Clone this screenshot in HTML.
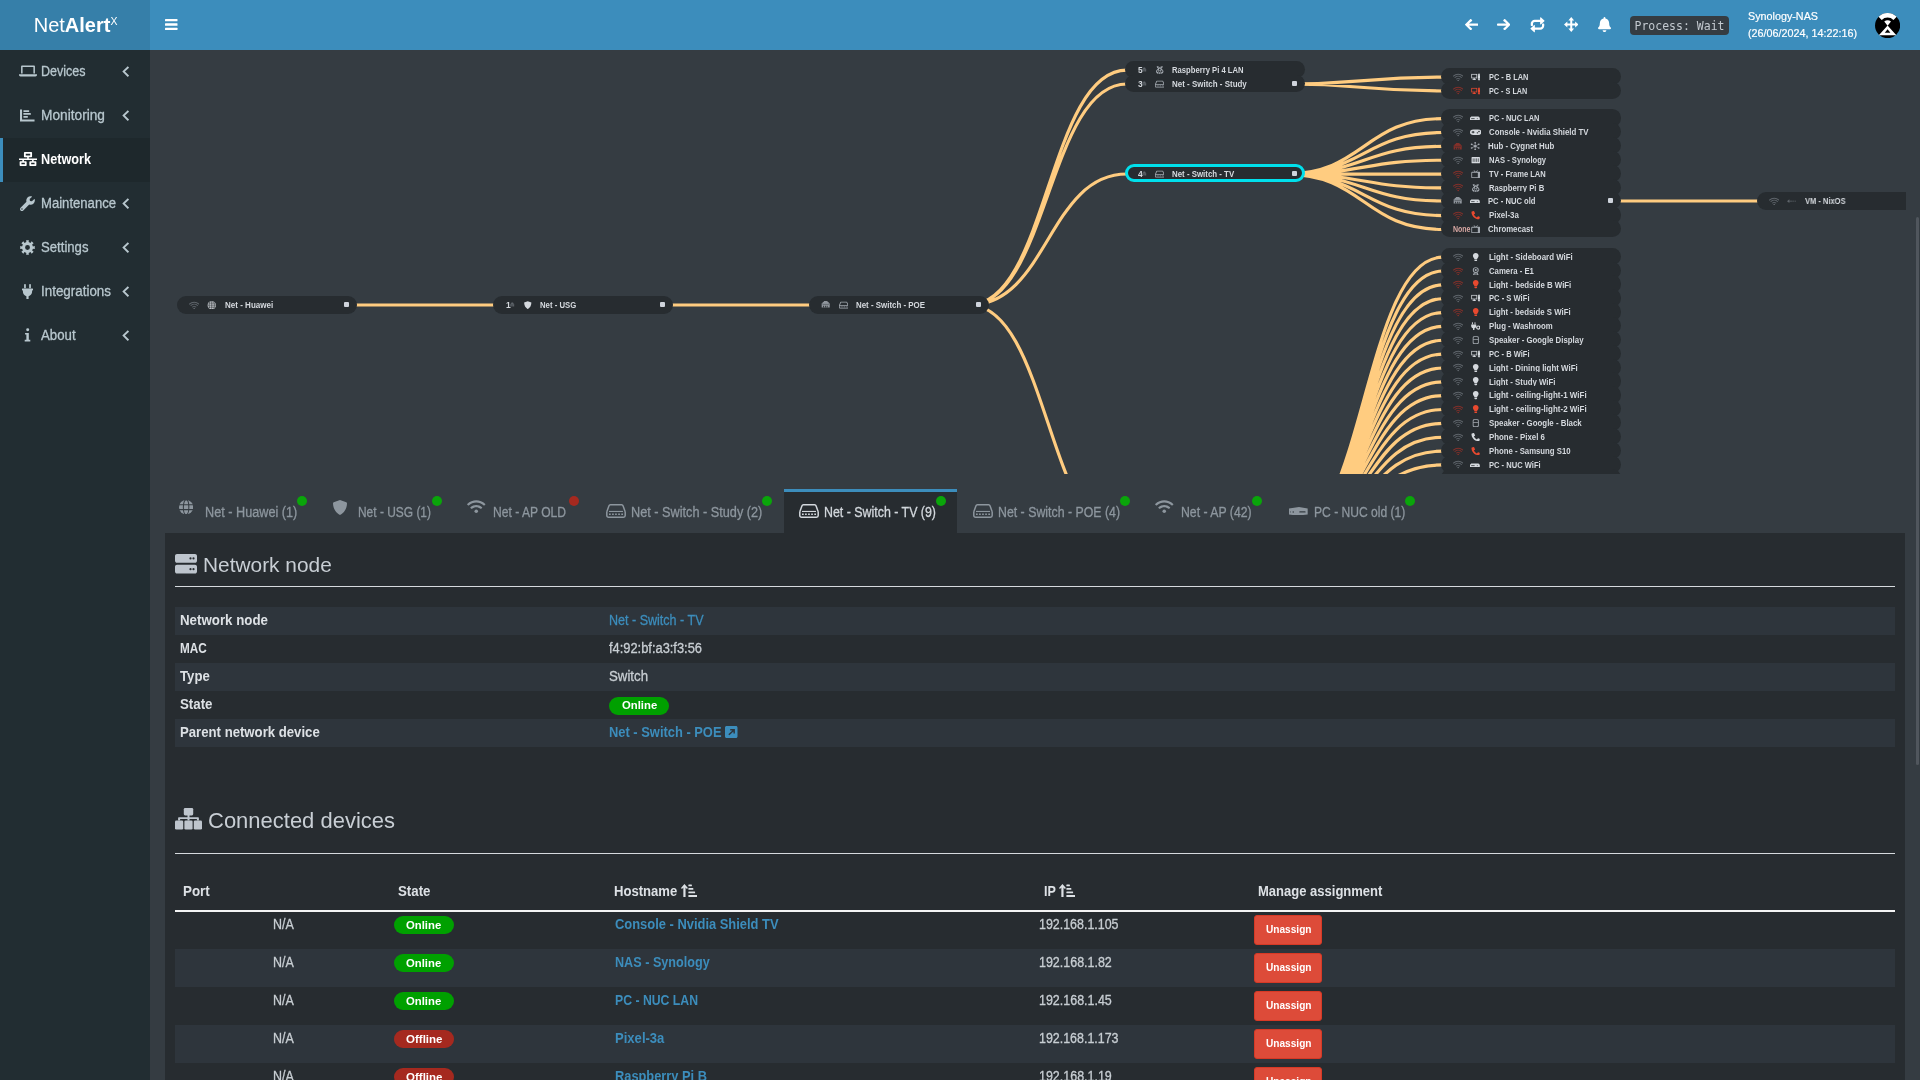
<!DOCTYPE html>
<html lang="en"><head><meta charset="utf-8"><title>NetAlertX - Network</title>
<style>
*{box-sizing:border-box}
html,body{margin:0;padding:0}
body{width:1920px;height:1080px;overflow:hidden;background:#353c42;font-family:"Liberation Sans",sans-serif;color:#bec5cb;font-size:13px;position:relative}
.ic{position:absolute;display:block;line-height:0}
.mi{position:absolute;display:block}
.t{position:absolute;white-space:nowrap;line-height:1;display:block;transform-origin:0 50%}
#hdr{position:absolute;left:0;top:0;width:1920px;height:50px;background:#3c8dbc;will-change:transform}
#logo{position:absolute;left:0;top:0;width:150px;height:50px;background:#367fa9;color:#fff}
#side{position:absolute;left:0;top:50px;width:150px;height:1030px;background:#222d32;will-change:transform}
#side .act{position:absolute;left:0;top:88px;width:150px;height:44px;background:#1e282c;border-left:3px solid #3c8dbc}
#tree{position:absolute;left:165px;top:50px;width:1741px;height:424px;overflow:hidden;will-change:transform}
#tree svg.links{position:absolute;left:0;top:0}
.nd{position:absolute;width:180px;height:18px;border-radius:9px;background:#272c30}
.nl{font-weight:bold;color:#d5d9de}
.tg{position:absolute;width:5px;height:5px;background:#cfd4dc;border-radius:1px}
#tabs{position:absolute;left:165px;top:489px;width:1740px;height:44px;background:#353c42;will-change:transform}
#tabs .on{position:absolute;left:619px;top:0;width:173px;height:44px;background:#272c30;border-top:3px solid #3c8dbc}
.dot{position:absolute;width:10px;height:10px;border-radius:5px}
#pane{position:absolute;left:165px;top:533px;width:1740px;height:560px;background:#272c30;will-change:transform}
.hr{position:absolute;left:10px;width:1720px;height:1px;background:#d6dade}
.row{position:absolute;left:10px;width:1720px}
.st{background:#2e353c}
.bdg{position:absolute;height:18px;border-radius:9px}
.btn{position:absolute;width:68px;height:30px;background:#dd4b39;border:1px solid #d73925;border-radius:3px}
#sb{position:absolute;left:1915.500px;top:216.500px;width:3px;height:548px;border-radius:1.500px;background:#50565d}
</style></head>
<body>
<div id="hdr">
<div id="logo">
<div id="logo"><span class="t" style="left:33.700px;top:14px;font-size:20px;line-height:23px;color:#fff">Net<b>Alert</b></span><span class="t" style="left:110.500px;top:16px;font-size:10.500px;color:#fff">X</span></div>
<span class="ic" style="left:165px;top:19px;width:12.5px;height:11px;"><svg width="12.5" height="11" viewBox="0 0 13 11" fill="#fff" preserveAspectRatio="none" style="display:block;color:#fff;"><rect x="0" y="0" width="13" height="2.300" rx=".5"/><rect x="0" y="4.350" width="13" height="2.300" rx=".5"/><rect x="0" y="8.700" width="13" height="2.300" rx=".5"/></svg></span>
<span class="ic" style="left:1464.8px;top:19.2px;width:13.4px;height:11.2px;"><svg width="13.4" height="11.2" viewBox="0 0 14 13" fill="#fff" preserveAspectRatio="none" style="display:block;color:#fff;"><path d="M7.300 11.900 6.500 12.700c-.3.300-.800.300-1.100 0L.2 7.100c-.3-.3-.3-.800 0-1.100L5.400.3c.3-.3.800-.3 1.100 0l.8.800c.3.300.3.800 0 1.100L4.100 5.300h9.100c.400 0 .800.300.800.800v1c0 .400-.300.800-.800.800H4.100l3.200 3c.3.200.3.700 0 1z"/></svg></span>
<span class="ic" style="left:1497px;top:19.2px;width:13.4px;height:11.2px;"><svg width="13.4" height="11.2" viewBox="0 0 14 13" fill="#fff" preserveAspectRatio="none" style="display:block;color:#fff;"><g transform="translate(14 0) scale(-1 1)"><path d="M7.300 11.900 6.500 12.700c-.3.300-.800.300-1.100 0L.2 7.100c-.3-.3-.3-.800 0-1.100L5.400.3c.3-.3.800-.3 1.100 0l.8.800c.3.300.3.800 0 1.100L4.100 5.300h9.100c.400 0 .800.300.800.800v1c0 .400-.300.800-.800.800H4.100l3.200 3c.3.200.3.700 0 1z"/></g></svg></span>
<span class="ic" style="left:1529.5px;top:17px;width:15px;height:15.5px;"><svg width="15" height="15.5" viewBox="0 0 16 16" fill="#fff" preserveAspectRatio="none" style="display:block;color:#fff;"><path d="M.8 8.600V7c0-2.300 1.900-4.200 4.200-4.200h5.800V.9c0-.5.600-.8 1-.4l3.500 3c.3.300.3.700 0 1l-3.500 3c-.4.300-1 .100-1-.4V5.200H5c-1 0-1.800.800-1.800 1.800v1.600c0 .300-.3.600-.6.600H1.400c-.3 0-.6-.3-.6-.6z"/><path d="M15.200 7.400V9c0 2.300-1.900 4.200-4.200 4.200H5.200v1.900c0 .5-.600.800-1 .4l-3.500-3c-.3-.3-.3-.7 0-1l3.500-3c.4-.3 1-.100 1 .4v1.900H11c1 0 1.800-.800 1.800-1.800V7.400c0-.3.300-.6.600-.6h1.200c.3 0 .6.300.6.600z"/></svg></span>
<span class="ic" style="left:1563.5px;top:17px;width:14.5px;height:15px;"><svg width="14.5" height="15" viewBox="0 0 16 16" fill="#fff" preserveAspectRatio="none" style="display:block;color:#fff;"><path d="M8 0 11.200 3.700H9.100V6.900H12.300V4.800L16 8 12.300 11.200V9.100H9.100V12.300H11.200L8 16 4.800 12.300H6.900V9.100H3.700V11.200L0 8 3.700 4.800V6.900H6.900V3.700H4.800Z"/></svg></span>
<span class="ic" style="left:1598px;top:17px;width:13px;height:15px;"><svg width="13" height="15" viewBox="0 0 14 16" fill="#fff" preserveAspectRatio="none" style="display:block;color:#fff;"><path d="M7 16c1.100 0 2-.9 2-2H5c0 1.100.9 2 2 2zM13.700 11.300c-.6-.6-1.700-1.600-1.700-4.800 0-2.400-1.700-4.300-4-4.800V1c0-.6-.4-1-1-1S6 .4 6 1v.7C3.700 2.200 2 4.100 2 6.500c0 3.200-1.100 4.200-1.700 4.800-.2.200-.3.500-.3.700 0 .5.400 1 1 1h12c.6 0 1-.5 1-1 0-.2-.1-.5-.3-.7z"/></svg></span>
<span class="t" style="left:1630px;top:16px;width:99px;height:19px;background:#353c42;border-radius:4px"></span>
<span class="t" id="f1" style="left:1634.50px;top:21.00px;font-size:11.5px;color:#c3c9cf;font-family:'DejaVu Sans Mono','Liberation Mono',monospace;">Process: Wait</span>
<span class="t" id="f2" style="left:1748.00px;top:11.00px;font-size:11.5px;color:#fff;transform:scaleX(0.9359);-webkit-text-stroke:.2px #fff;">Synology-NAS</span>
<span class="t" id="f3" style="left:1748.00px;top:28.00px;font-size:11.5px;color:#fff;transform:scaleX(0.9366);-webkit-text-stroke:.2px #fff;">(26/06/2024, 14:22:16)</span>
<span class="ic" style="left:1875px;top:12.800px;width:25.200px;height:25.200px"><svg width="25.200" height="25.200" viewBox="0 0 25 25"><circle cx="12.500" cy="12.500" r="12.500" fill="#000"/><path d="M3.510 3.810A12.500 12.500 0 0 1 21.490 3.810L18.330 6.870A8.100 8.100 0 0 0 6.670 6.870ZM12.500 12.700 9.160 8.520A5.200 5.200 0 0 1 15.840 8.520ZM12.500 12.300 21.200 22H3.800Z" fill="#fff"/><path d="M12.500 16.200 15.300 19.600H9.700Z" fill="#000"/></svg></span>
</div>
<div id="side"><div class="act"></div>
<span class="ic" style="left:19px;top:15px;width:18px;height:12px;"><svg width="18" height="12" viewBox="0 0 20 14" fill="#b8c7ce" preserveAspectRatio="none" style="display:block;color:#b8c7ce;"><path d="M3.2 0.6h13.6c.5 0 .9.4.9.9v8.3h-1.7V2.2H4v7.6H2.3V1.5c0-.5.4-.9.9-.9z"/><path d="M0 10.8h20v.9c0 .9-.8 1.6-1.7 1.6H1.7C.8 13.300 0 12.600 0 11.700z"/></svg></span>
<span class="t" id="f4" style="left:41.00px;top:14.00px;font-size:14px;color:#b8c7ce;-webkit-text-stroke:.3px;transform:scaleX(0.8956);">Devices</span>
<span class="ic" style="left:121.6px;top:16.3px;width:7.4px;height:11.2px;"><svg width="7.4" height="11.2" viewBox="0 0 8 12" fill="#b8c7ce" preserveAspectRatio="none" style="display:block;color:#b8c7ce;"><path d="M6.200.3 7.700 1.700 3.200 6l4.500 4.300-1.500 1.400L.3 6z"/></svg></span>
<span class="ic" style="left:20px;top:58.5px;width:15px;height:13px;"><svg width="15" height="13" viewBox="0 0 16 14" fill="#b8c7ce" preserveAspectRatio="none" style="display:block;color:#b8c7ce;"><path d="M0 .5h2.2v10.800H15.500v2.200H0z"/><rect x="3.600" y="1.300" width="6.200" height="1.900" rx=".4"/><rect x="3.600" y="4.400" width="8" height="1.900" rx=".4"/><rect x="3.600" y="7.500" width="4.800" height="1.900" rx=".4"/><rect x="3.600" y="7.500" width="9.700" height="1.900" rx=".4" opacity="0"/></svg></span>
<span class="t" id="f5" style="left:41.00px;top:58.00px;font-size:14px;color:#b8c7ce;-webkit-text-stroke:.3px;transform:scaleX(0.9790);">Monitoring</span>
<span class="ic" style="left:121.6px;top:60.3px;width:7.4px;height:11.2px;"><svg width="7.4" height="11.2" viewBox="0 0 8 12" fill="#b8c7ce" preserveAspectRatio="none" style="display:block;color:#b8c7ce;"><path d="M6.200.3 7.700 1.700 3.200 6l4.500 4.300-1.500 1.400L.3 6z"/></svg></span>
<span class="ic" style="left:19px;top:102px;width:18px;height:14px;"><svg width="18" height="14" viewBox="0 0 20 16" fill="#fff" preserveAspectRatio="none" style="display:block;color:#fff;"><path fill-rule="evenodd" d="M6.300 0h7.400c.5 0 .8.400.8.800v4.400c0 .500-.400.800-.800.800h-2.800v1.500H20v1.700h-3.700v1.300h2.200c.500 0 .800.400.800.800v3.900c0 .500-.400.800-.800.800h-6.200c-.500 0-.800-.400-.800-.800v-3.900c0-.500.400-.800.800-.800h2.200V9.200H5.500v1.300h2.200c.500 0 .800.400.800.800v3.900c0 .500-.400.800-.800.800H1.500c-.500 0-.800-.400-.800-.800v-3.900c0-.500.400-.800.800-.800h2.200V9.200H0V7.500h9.100V6H6.300c-.500 0-.800-.400-.800-.800V.8c0-.500.400-.800.800-.800zM7.500 1.900v2.200h5V1.900zM2.700 12.400v1.700h3.800v-1.700zM13.500 12.400v1.700h3.800v-1.700z"/></svg></span>
<span class="t" id="f6" style="left:41.00px;top:102.00px;font-size:14px;color:#fff;font-weight:bold;transform:scaleX(0.9052);">Network</span>
<span class="ic" style="left:20px;top:145.5px;width:15px;height:15px;"><svg width="15" height="15" viewBox="0 0 16 16" fill="#b8c7ce" preserveAspectRatio="none" style="display:block;color:#b8c7ce;"><path d="M15.700 3.600c-.1-.3-.4-.4-.7-.2l-2.300 2.300-2.100-.3-.3-2.100L12.600 1c.2-.2.1-.6-.2-.7C10.900-.1 9.200.3 8 1.500 6.700 2.800 6.400 4.600 6.900 6.200L.6 12.500c-.8.800-.8 2.100 0 2.900s2.100.8 2.900 0l6.300-6.300c1.600.5 3.400.2 4.700-1.100 1.200-1.200 1.600-2.900 1.200-4.400zM2.100 14.700c-.4 0-.8-.3-.8-.8s.3-.8.800-.8.800.3.800.8-.4.800-.8.800z"/></svg></span>
<span class="t" id="f7" style="left:41.00px;top:146.00px;font-size:14px;color:#b8c7ce;-webkit-text-stroke:.3px;transform:scaleX(0.9355);">Maintenance</span>
<span class="ic" style="left:121.6px;top:148.3px;width:7.4px;height:11.2px;"><svg width="7.4" height="11.2" viewBox="0 0 8 12" fill="#b8c7ce" preserveAspectRatio="none" style="display:block;color:#b8c7ce;"><path d="M6.200.3 7.700 1.700 3.200 6l4.500 4.300-1.500 1.400L.3 6z"/></svg></span>
<span class="ic" style="left:20px;top:189.5px;width:15px;height:15px;"><svg width="15" height="15" viewBox="0 0 16 16" fill="#b8c7ce" preserveAspectRatio="none" style="display:block;color:#b8c7ce;"><path fill-rule="evenodd" d="M6.51 0.24 L9.49 0.24 L9.20 2.22 L11.24 3.07 L12.43 1.46 L14.54 3.57 L12.93 4.76 L13.78 6.80 L15.76 6.51 L15.76 9.49 L13.78 9.20 L12.93 11.24 L14.54 12.43 L12.43 14.54 L11.24 12.93 L9.20 13.78 L9.49 15.76 L6.51 15.76 L6.80 13.78 L4.76 12.93 L3.57 14.54 L1.46 12.43 L3.07 11.24 L2.22 9.20 L0.24 9.49 L0.24 6.51 L2.22 6.80 L3.07 4.76 L1.46 3.57 L3.57 1.46 L4.76 3.07 L6.80 2.22Z M8 5.400a2.600 2.600 0 1 0 0 5.200a2.600 2.600 0 1 0 0-5.200z"/></svg></span>
<span class="t" id="f8" style="left:41.00px;top:190.00px;font-size:14px;color:#b8c7ce;-webkit-text-stroke:.3px;transform:scaleX(0.9389);">Settings</span>
<span class="ic" style="left:121.6px;top:192.3px;width:7.4px;height:11.2px;"><svg width="7.4" height="11.2" viewBox="0 0 8 12" fill="#b8c7ce" preserveAspectRatio="none" style="display:block;color:#b8c7ce;"><path d="M6.200.3 7.700 1.700 3.200 6l4.500 4.300-1.500 1.400L.3 6z"/></svg></span>
<span class="ic" style="left:22px;top:233.5px;width:11px;height:15px;"><svg width="11" height="15" viewBox="0 0 12 16" fill="#b8c7ce" preserveAspectRatio="none" style="display:block;color:#b8c7ce;"><rect x="2.300" y="0" width="1.900" height="4.500" rx=".9"/><rect x="7.800" y="0" width="1.900" height="4.500" rx=".9"/><path d="M.5 4.900h11c.3 0 .5.2.5.5v.9c0 .3-.2.5-.5.5H11v1.500c0 2.300-1.600 4.200-3.800 4.700V16H4.800v-3c-2.200-.5-3.800-2.400-3.800-4.700V6.800H.5C.2 6.800 0 6.600 0 6.300v-.9c0-.3.2-.5.5-.5z"/></svg></span>
<span class="t" id="f9" style="left:41.00px;top:234.00px;font-size:14px;color:#b8c7ce;-webkit-text-stroke:.3px;transform:scaleX(0.9567);">Integrations</span>
<span class="ic" style="left:121.6px;top:236.3px;width:7.4px;height:11.2px;"><svg width="7.4" height="11.2" viewBox="0 0 8 12" fill="#b8c7ce" preserveAspectRatio="none" style="display:block;color:#b8c7ce;"><path d="M6.200.3 7.700 1.700 3.200 6l4.500 4.300-1.500 1.400L.3 6z"/></svg></span>
<span class="ic" style="left:24px;top:278px;width:7px;height:14px;"><svg width="7" height="14" viewBox="0 0 8 16" fill="#b8c7ce" preserveAspectRatio="none" style="display:block;color:#b8c7ce;"><circle cx="4.200" cy="1.900" r="1.700"/><path d="M1.200 5.600h4.300v7.900h1.700v1.900H.8v-1.900h1.900V7.500H1.200z"/></svg></span>
<span class="t" id="f10" style="left:41.00px;top:278.00px;font-size:14px;color:#b8c7ce;-webkit-text-stroke:.3px;transform:scaleX(0.9455);">About</span>
<span class="ic" style="left:121.6px;top:280.3px;width:7.4px;height:11.2px;"><svg width="7.4" height="11.2" viewBox="0 0 8 12" fill="#b8c7ce" preserveAspectRatio="none" style="display:block;color:#b8c7ce;"><path d="M6.200.3 7.700 1.700 3.200 6l4.500 4.300-1.500 1.400L.3 6z"/></svg></span>
</div>
<div id="tree">
<svg class="links" width="1740" height="424" viewBox="0 0 1740 424" fill="none" stroke="#ffcc80" stroke-width="3.150"><path d="M172.0 255.00C251.0 255.00 251.0 255.00 330.0 255.00 M488.0 255.00C567.0 255.00 567.0 255.00 646.0 255.00 M804.0 255.00C883.0 255.00 883.0 20.17 962.0 20.17 M804.0 255.00C883.0 255.00 883.0 34.02 962.0 34.02 M804.0 255.00C883.0 255.00 883.0 124.05 962.0 124.05 M804.0 255.00C883.0 255.00 883.0 491.07 962.0 491.07 M1120.0 34.02C1199.0 34.02 1199.0 27.10 1278.0 27.10 M1120.0 34.02C1199.0 34.02 1199.0 40.95 1278.0 40.95 M1120.0 124.05C1199.0 124.05 1199.0 68.65 1278.0 68.65 M1120.0 124.05C1199.0 124.05 1199.0 82.50 1278.0 82.50 M1120.0 124.05C1199.0 124.05 1199.0 96.35 1278.0 96.35 M1120.0 124.05C1199.0 124.05 1199.0 110.20 1278.0 110.20 M1120.0 124.05C1199.0 124.05 1199.0 124.05 1278.0 124.05 M1120.0 124.05C1199.0 124.05 1199.0 137.90 1278.0 137.90 M1120.0 124.05C1199.0 124.05 1199.0 151.00 1278.0 151.00 M1120.0 124.05C1199.0 124.05 1199.0 165.60 1278.0 165.60 M1120.0 124.05C1199.0 124.05 1199.0 179.45 1278.0 179.45 M1120.0 491.07C1199.0 491.07 1199.0 207.15 1278.0 207.15 M1120.0 491.07C1199.0 491.07 1199.0 221.00 1278.0 221.00 M1120.0 491.07C1199.0 491.07 1199.0 234.85 1278.0 234.85 M1120.0 491.07C1199.0 491.07 1199.0 248.70 1278.0 248.70 M1120.0 491.07C1199.0 491.07 1199.0 262.55 1278.0 262.55 M1120.0 491.07C1199.0 491.07 1199.0 276.40 1278.0 276.40 M1120.0 491.07C1199.0 491.07 1199.0 290.25 1278.0 290.25 M1120.0 491.07C1199.0 491.07 1199.0 304.10 1278.0 304.10 M1120.0 491.07C1199.0 491.07 1199.0 317.95 1278.0 317.95 M1120.0 491.07C1199.0 491.07 1199.0 331.80 1278.0 331.80 M1120.0 491.07C1199.0 491.07 1199.0 345.65 1278.0 345.65 M1120.0 491.07C1199.0 491.07 1199.0 359.50 1278.0 359.50 M1120.0 491.07C1199.0 491.07 1199.0 373.35 1278.0 373.35 M1120.0 491.07C1199.0 491.07 1199.0 387.20 1278.0 387.20 M1120.0 491.07C1199.0 491.07 1199.0 401.05 1278.0 401.05 M1120.0 491.07C1199.0 491.07 1199.0 414.90 1278.0 414.90 M1120.0 491.07C1199.0 491.07 1199.0 428.75 1278.0 428.75 M1120.0 491.07C1199.0 491.07 1199.0 442.60 1278.0 442.60 M1120.0 491.07C1199.0 491.07 1199.0 456.45 1278.0 456.45 M1120.0 491.07C1199.0 491.07 1199.0 470.30 1278.0 470.30 M1120.0 491.07C1199.0 491.07 1199.0 484.15 1278.0 484.15 M1120.0 491.07C1199.0 491.07 1199.0 498.00 1278.0 498.00 M1120.0 491.07C1199.0 491.07 1199.0 511.85 1278.0 511.85 M1120.0 491.07C1199.0 491.07 1199.0 525.70 1278.0 525.70 M1120.0 491.07C1199.0 491.07 1199.0 539.55 1278.0 539.55 M1120.0 491.07C1199.0 491.07 1199.0 553.40 1278.0 553.40 M1120.0 491.07C1199.0 491.07 1199.0 567.25 1278.0 567.25 M1120.0 491.07C1199.0 491.07 1199.0 581.10 1278.0 581.10 M1120.0 491.07C1199.0 491.07 1199.0 594.95 1278.0 594.95 M1120.0 491.07C1199.0 491.07 1199.0 608.80 1278.0 608.80 M1120.0 491.07C1199.0 491.07 1199.0 622.65 1278.0 622.65 M1120.0 491.07C1199.0 491.07 1199.0 636.50 1278.0 636.50 M1120.0 491.07C1199.0 491.07 1199.0 650.35 1278.0 650.35 M1120.0 491.07C1199.0 491.07 1199.0 664.20 1278.0 664.20 M1120.0 491.07C1199.0 491.07 1199.0 678.05 1278.0 678.05 M1120.0 491.07C1199.0 491.07 1199.0 691.90 1278.0 691.90 M1120.0 491.07C1199.0 491.07 1199.0 705.75 1278.0 705.75 M1120.0 491.07C1199.0 491.07 1199.0 719.60 1278.0 719.60 M1120.0 491.07C1199.0 491.07 1199.0 733.45 1278.0 733.45 M1120.0 491.07C1199.0 491.07 1199.0 747.30 1278.0 747.30 M1120.0 491.07C1199.0 491.07 1199.0 761.15 1278.0 761.15 M1120.0 491.07C1199.0 491.07 1199.0 775.00 1278.0 775.00 M1436.0 151.00C1515.0 151.00 1515.0 151.00 1594.0 151.00"/></svg>
<div class="nd" style="left:12.0px;top:245.90px;height:18.2px;border-radius:9.10px;">
<svg class="mi" style="left:11.6px;top:4.650000000000023px;color:#5f656b" width="10.4" height="8.5" viewBox="0 0 10 9" preserveAspectRatio="none" fill="#5f656b"><g fill="none" stroke="currentColor" stroke-width="1.05" stroke-linecap="round"><path d="M3.44 6.34A2.2 2.2 0 0 1 6.56 6.34"/><path d="M1.89 4.79A4.4 4.4 0 0 1 8.11 4.79"/><path d="M.4 3.23A6.6 6.6 0 0 1 9.6 3.23"/></g><circle cx="5" cy="7.9" r=".85"/></svg>
<svg class="mi" style="left:29.5px;top:4.750000000000023px;color:#d5d9de" width="9.5" height="8.3" viewBox="0 0 10 9" preserveAspectRatio="none" fill="#d5d9de"><circle cx="5" cy="4.500" r="4.300"/><path d="M5 .2v8.600M.7 4.500h8.600M1.500 2.300h7M1.500 6.700h7M3 .8c-1 2.200-1 5.200 0 7.400M7 .8c1 2.200 1 5.200 0 7.400" stroke="#272c30" stroke-width=".65" fill="none"/></svg>
<span class="t" id="f11" style="left:47.50px;top:6.10px;font-size:8.2px;color:#d5d9de;font-weight:bold;transform:scaleX(0.9829);">Net - Huawei</span>
<i class="tg" style="left:166.5px;top:6.500000000000023px"></i>
</div>
<div class="nd" style="left:328.0px;top:245.90px;height:18.2px;border-radius:9.10px;">
<span class="t" id="f12" style="left:12.50px;top:6.10px;font-size:8.2px;color:#d5d9de;font-weight:bold;transform:scaleX(1.0301);">1</span>
<svg class="mi" style="left:17px;top:6.350000000000023px;color:#5e646a" width="4.5" height="5" viewBox="0 0 10 9" preserveAspectRatio="none" fill="#5e646a"><path d="M.7 3.600h1.100V2.300h1.200V1h4v1.300h1.200v1.300h1.100V8.300H.7z"/><path d="M2.300 8.300V6.200h.9v2.100zm1.900 0V6.200h.9v2.100zm1.900 0V6.200h.9v2.100z" fill="#272c30"/><rect x="1.600" y="4.300" width="6.800" height=".8" fill="#272c30" opacity=".55"/></svg>
<svg class="mi" style="left:29.5px;top:4.750000000000023px;color:#d5d9de" width="9.5" height="8.3" viewBox="0 0 10 9" preserveAspectRatio="none" fill="#d5d9de"><path d="M5 .2 8.800 1.700c0 3.300-1.500 5.900-3.800 7.100C2.700 7.600 1.200 5 1.200 1.700z"/></svg>
<span class="t" id="f13" style="left:46.70px;top:6.10px;font-size:8.2px;color:#d5d9de;font-weight:bold;transform:scaleX(0.9498);">Net - USG</span>
<i class="tg" style="left:166.5px;top:6.500000000000023px"></i>
</div>
<div class="nd" style="left:644.0px;top:245.90px;height:18.2px;border-radius:9.10px;">
<svg class="mi" style="left:12.4px;top:4.450000000000022px;color:#8f959c" width="9.4" height="8.2" viewBox="0 0 10 9" preserveAspectRatio="none" fill="#8f959c"><path d="M.7 3.600h1.100V2.300h1.200V1h4v1.300h1.200v1.300h1.100V8.300H.7z"/><path d="M2.300 8.300V6.200h.9v2.100zm1.900 0V6.200h.9v2.100zm1.900 0V6.200h.9v2.100z" fill="#272c30"/><rect x="1.600" y="4.300" width="6.800" height=".8" fill="#272c30" opacity=".55"/></svg>
<svg class="mi" style="left:29.5px;top:4.750000000000023px;color:#a4aab1" width="9.5" height="8.3" viewBox="0 0 10 9" preserveAspectRatio="none" fill="#a4aab1"><path d="M2 .900h6c.4 0 .7.200.8.600L10 4.500V7.300c0 .5-.4.900-.9.900H.9C.4 8.200 0 7.800 0 7.300V4.500L1.200 1.500C1.300 1.100 1.600.9 2 .9z"/><path d="M2.100 1.700 1.100 4.300h7.800L7.900 1.700zM.8 5.100v2.300h8.400V5.100z" fill="#272c30"/><path d="M1.800 6h1v.7h-1zm1.800 0h1v.7h-1zm1.800 0h1v.7h-1zm1.800 0h1v.7h-1z"/></svg>
<span class="t" id="f14" style="left:46.70px;top:6.10px;font-size:8.2px;color:#d5d9de;font-weight:bold;transform:scaleX(0.9661);">Net - Switch - POE</span>
<i class="tg" style="left:166.5px;top:6.500000000000023px"></i>
</div>
<div class="nd" style="left:960.0px;top:10.77px;height:17.4px;border-radius:8.70px;">
<span class="t" id="f15" style="left:12.50px;top:6.23px;font-size:8.2px;color:#d5d9de;font-weight:bold;transform:scaleX(1.0301);">5</span>
<svg class="mi" style="left:17px;top:6.649999999999999px;color:#5e646a" width="4.5" height="5" viewBox="0 0 10 9" preserveAspectRatio="none" fill="#5e646a"><path d="M.7 3.600h1.100V2.300h1.200V1h4v1.300h1.200v1.300h1.100V8.300H.7z"/><path d="M2.300 8.300V6.200h.9v2.100zm1.900 0V6.200h.9v2.100zm1.900 0V6.200h.9v2.100z" fill="#272c30"/><rect x="1.600" y="4.300" width="6.800" height=".8" fill="#272c30" opacity=".55"/></svg>
<svg class="mi" style="left:29.5px;top:5.049999999999999px;color:#a4aab1" width="9.5" height="8.3" viewBox="0 0 10 9" preserveAspectRatio="none" fill="#a4aab1"><path d="M1.800.300c1.300-.100 2.500.500 3.200 1.400C5.700.800 6.900.200 8.200.300 8.100 1.500 7.500 2.400 6.600 2.900 8 3.500 8.900 4.700 8.900 6 8.900 7.700 7.200 8.900 5 8.900S1.100 7.700 1.100 6C1.100 4.700 2 3.500 3.400 2.900 2.500 2.400 1.900 1.500 1.800.3z"/><g fill="#272c30"><circle cx="5" cy="3.900" r=".95"/><circle cx="3" cy="5.600" r=".9"/><circle cx="7" cy="5.600" r=".9"/><circle cx="5" cy="6" r=".8"/><circle cx="3.900" cy="7.600" r=".75"/><circle cx="6.100" cy="7.600" r=".75"/><path d="M3.200 1.100 4.700 2.300M6.800 1.100 5.300 2.300" stroke="#272c30" stroke-width=".5"/></g></svg>
<span class="t" id="f16" style="left:46.80px;top:6.23px;font-size:8.2px;color:#d5d9de;font-weight:bold;transform:scaleX(0.9365);">Raspberry Pi 4 LAN</span>
</div>
<div class="nd" style="left:960.0px;top:24.62px;height:17.4px;border-radius:8.70px;">
<span class="t" id="f17" style="left:12.50px;top:6.38px;font-size:8.2px;color:#d5d9de;font-weight:bold;transform:scaleX(1.0301);">3</span>
<svg class="mi" style="left:17px;top:6.650000000000006px;color:#5e646a" width="4.5" height="5" viewBox="0 0 10 9" preserveAspectRatio="none" fill="#5e646a"><path d="M.7 3.600h1.100V2.300h1.200V1h4v1.300h1.200v1.300h1.100V8.300H.7z"/><path d="M2.300 8.300V6.200h.9v2.100zm1.900 0V6.200h.9v2.100zm1.900 0V6.200h.9v2.100z" fill="#272c30"/><rect x="1.600" y="4.300" width="6.800" height=".8" fill="#272c30" opacity=".55"/></svg>
<svg class="mi" style="left:29.5px;top:5.050000000000006px;color:#a4aab1" width="9.5" height="8.3" viewBox="0 0 10 9" preserveAspectRatio="none" fill="#a4aab1"><path d="M2 .900h6c.4 0 .7.200.8.600L10 4.500V7.300c0 .5-.4.900-.9.900H.9C.4 8.200 0 7.800 0 7.300V4.500L1.200 1.500C1.300 1.100 1.600.9 2 .9z"/><path d="M2.100 1.700 1.100 4.300h7.800L7.900 1.700zM.8 5.100v2.300h8.400V5.100z" fill="#272c30"/><path d="M1.800 6h1v.7h-1zm1.800 0h1v.7h-1zm1.800 0h1v.7h-1zm1.800 0h1v.7h-1z"/></svg>
<span class="t" id="f18" style="left:46.80px;top:6.38px;font-size:8.2px;color:#d5d9de;font-weight:bold;transform:scaleX(0.9730);">Net - Switch - Study</span>
<i class="tg" style="left:166.5px;top:6.800000000000006px"></i>
</div>
<div class="nd" style="left:960.0px;top:113.95px;height:18.3px;border-radius:9.15px;border:3px solid #00e0ec;">
<span class="t" id="f19" style="left:9.50px;top:4.05px;font-size:8.2px;color:#d5d9de;font-weight:bold;transform:scaleX(1.0301);">4</span>
<svg class="mi" style="left:14px;top:4.349999999999994px;color:#5e646a" width="4.5" height="5" viewBox="0 0 10 9" preserveAspectRatio="none" fill="#5e646a"><path d="M.7 3.600h1.100V2.300h1.200V1h4v1.300h1.200v1.300h1.100V8.300H.7z"/><path d="M2.300 8.300V6.200h.9v2.100zm1.900 0V6.200h.9v2.100zm1.900 0V6.200h.9v2.100z" fill="#272c30"/><rect x="1.600" y="4.300" width="6.800" height=".8" fill="#272c30" opacity=".55"/></svg>
<svg class="mi" style="left:26.5px;top:2.7499999999999947px;color:#a4aab1" width="9.5" height="8.3" viewBox="0 0 10 9" preserveAspectRatio="none" fill="#a4aab1"><path d="M2 .900h6c.4 0 .7.200.8.600L10 4.500V7.300c0 .5-.4.900-.9.900H.9C.4 8.200 0 7.800 0 7.300V4.500L1.200 1.500C1.300 1.100 1.600.9 2 .9z"/><path d="M2.100 1.700 1.100 4.300h7.800L7.900 1.700zM.8 5.100v2.300h8.400V5.100z" fill="#272c30"/><path d="M1.800 6h1v.7h-1zm1.800 0h1v.7h-1zm1.800 0h1v.7h-1zm1.800 0h1v.7h-1z"/></svg>
<span class="t" id="f20" style="left:43.80px;top:4.05px;font-size:8.2px;color:#d5d9de;font-weight:bold;transform:scaleX(0.9629);">Net - Switch - TV</span>
<i class="tg" style="left:163.5px;top:4.499999999999995px"></i>
</div>
<div class="nd" style="left:1276.0px;top:17.70px;height:17.4px;border-radius:8.70px;">
<svg class="mi" style="left:11.6px;top:4.9500000000000055px;color:#5f656b" width="10.4" height="8.5" viewBox="0 0 10 9" preserveAspectRatio="none" fill="#5f656b"><g fill="none" stroke="currentColor" stroke-width="1.05" stroke-linecap="round"><path d="M3.44 6.34A2.2 2.2 0 0 1 6.56 6.34"/><path d="M1.89 4.79A4.4 4.4 0 0 1 8.11 4.79"/><path d="M.4 3.23A6.6 6.6 0 0 1 9.6 3.23"/></g><circle cx="5" cy="7.9" r=".85"/></svg>
<svg class="mi" style="left:29.5px;top:5.050000000000006px;color:#d5d9de" width="9.5" height="8.3" viewBox="0 0 10 9" preserveAspectRatio="none" fill="#d5d9de"><path d="M.3 1h6.200v4.800H.3z"/><path d="M1.100 1.800h4.600V5H1.100z" fill="#272c30"/><path d="M2.600 5.800h1.600v1h1v.8H1.600v-.8h1z"/><rect x="7.300" y=".8" width="2.400" height="7" rx=".4"/><rect x="8" y="1.800" width="1" height=".6" fill="#272c30"/><rect x="8" y="6" width="1" height=".8" fill="#272c30"/></svg>
<span class="t" id="f21" style="left:47.50px;top:6.30px;font-size:8.2px;color:#d5d9de;font-weight:bold;transform:scaleX(0.9022);">PC - B LAN</span>
</div>
<div class="nd" style="left:1276.0px;top:31.55px;height:17.4px;border-radius:8.70px;">
<svg class="mi" style="left:11.6px;top:4.9500000000000055px;color:#82302a" width="10.4" height="8.5" viewBox="0 0 10 9" preserveAspectRatio="none" fill="#82302a"><g fill="none" stroke="currentColor" stroke-width="1.05" stroke-linecap="round"><path d="M3.44 6.34A2.2 2.2 0 0 1 6.56 6.34"/><path d="M1.89 4.79A4.4 4.4 0 0 1 8.11 4.79"/><path d="M.4 3.23A6.6 6.6 0 0 1 9.6 3.23"/></g><circle cx="5" cy="7.9" r=".85"/></svg>
<svg class="mi" style="left:29.5px;top:5.050000000000006px;color:#e8492f" width="9.5" height="8.3" viewBox="0 0 10 9" preserveAspectRatio="none" fill="#e8492f"><path d="M.3 1h6.200v4.800H.3z"/><path d="M1.100 1.800h4.600V5H1.100z" fill="#272c30"/><path d="M2.600 5.800h1.600v1h1v.8H1.600v-.8h1z"/><rect x="7.300" y=".8" width="2.400" height="7" rx=".4"/><rect x="8" y="1.800" width="1" height=".6" fill="#272c30"/><rect x="8" y="6" width="1" height=".8" fill="#272c30"/></svg>
<span class="t" id="f22" style="left:47.50px;top:6.45px;font-size:8.2px;color:#d5d9de;font-weight:bold;transform:scaleX(0.8862);">PC - S LAN</span>
</div>
<div class="nd" style="left:1276.0px;top:59.25px;height:17.4px;border-radius:8.70px;">
<svg class="mi" style="left:11.6px;top:4.9500000000000055px;color:#5f656b" width="10.4" height="8.5" viewBox="0 0 10 9" preserveAspectRatio="none" fill="#5f656b"><g fill="none" stroke="currentColor" stroke-width="1.05" stroke-linecap="round"><path d="M3.44 6.34A2.2 2.2 0 0 1 6.56 6.34"/><path d="M1.89 4.79A4.4 4.4 0 0 1 8.11 4.79"/><path d="M.4 3.23A6.6 6.6 0 0 1 9.6 3.23"/></g><circle cx="5" cy="7.9" r=".85"/></svg>
<svg class="mi" style="left:29.35px;top:5.050000000000006px;color:#d5d9de" width="9.8" height="8.3" viewBox="0 0 10 9" preserveAspectRatio="none" fill="#d5d9de"><path d="M1.300 2.800h7.400L10 4.200v2.300H0V4.200z"/><rect x="1.200" y="4.700" width="3.500" height=".8" fill="#272c30"/><rect x="7" y="4.700" width=".8" height=".8" fill="#272c30"/></svg>
<span class="t" id="f23" style="left:47.50px;top:5.75px;font-size:8.2px;color:#d5d9de;font-weight:bold;transform:scaleX(0.9081);">PC - NUC LAN</span>
</div>
<div class="nd" style="left:1276.0px;top:73.10px;height:17.4px;border-radius:8.70px;">
<svg class="mi" style="left:11.6px;top:4.9500000000000055px;color:#5f656b" width="10.4" height="8.5" viewBox="0 0 10 9" preserveAspectRatio="none" fill="#5f656b"><g fill="none" stroke="currentColor" stroke-width="1.05" stroke-linecap="round"><path d="M3.44 6.34A2.2 2.2 0 0 1 6.56 6.34"/><path d="M1.89 4.79A4.4 4.4 0 0 1 8.11 4.79"/><path d="M.4 3.23A6.6 6.6 0 0 1 9.6 3.23"/></g><circle cx="5" cy="7.9" r=".85"/></svg>
<svg class="mi" style="left:28.55px;top:5.050000000000006px;color:#d5d9de" width="11.4" height="8.3" viewBox="0 0 10 9" preserveAspectRatio="none" fill="#d5d9de"><rect x="0" y="1.500" width="10" height="6" rx="3"/><path d="M2.200 3.200h1v.8h.8v1h-.8v.8h-1V5h-.8V4h.8z" fill="#272c30"/><circle cx="6.500" cy="5.200" r=".7" fill="#272c30"/><circle cx="7.900" cy="3.800" r=".7" fill="#272c30"/></svg>
<span class="t" id="f24" style="left:47.50px;top:5.90px;font-size:8.2px;color:#d5d9de;font-weight:bold;transform:scaleX(0.9592);">Console - Nvidia Shield TV</span>
</div>
<div class="nd" style="left:1276.0px;top:86.95px;height:17.4px;border-radius:8.70px;">
<svg class="mi" style="left:12.4px;top:4.750000000000005px;color:#82302a" width="9.4" height="8.2" viewBox="0 0 10 9" preserveAspectRatio="none" fill="#82302a"><path d="M.7 3.600h1.100V2.300h1.200V1h4v1.300h1.200v1.300h1.100V8.300H.7z"/><path d="M2.300 8.300V6.200h.9v2.100zm1.900 0V6.200h.9v2.100zm1.900 0V6.200h.9v2.100z" fill="#272c30"/><rect x="1.600" y="4.300" width="6.800" height=".8" fill="#272c30" opacity=".55"/></svg>
<svg class="mi" style="left:29.05px;top:5.050000000000006px;color:#a4aab1" width="10.4" height="8.3" viewBox="0 0 10 9" preserveAspectRatio="none" fill="#a4aab1"><circle cx="5" cy="4.500" r="1.300"/><circle cx="5" cy=".9" r=".9"/><circle cx="5" cy="8.100" r=".9"/><circle cx="1.600" cy="2.500" r=".9"/><circle cx="8.400" cy="2.500" r=".9"/><circle cx="1.600" cy="6.500" r=".9"/><circle cx="8.400" cy="6.500" r=".9"/><path d="M5 .9v7.200M1.600 2.500l6.800 4M8.400 2.500l-6.800 4" stroke="currentColor" stroke-width=".6"/></svg>
<span class="t" id="f25" style="left:46.70px;top:6.05px;font-size:8.2px;color:#d5d9de;font-weight:bold;transform:scaleX(0.9604);">Hub - Cygnet Hub</span>
</div>
<div class="nd" style="left:1276.0px;top:100.80px;height:17.4px;border-radius:8.70px;">
<svg class="mi" style="left:11.6px;top:4.9500000000000055px;color:#5f656b" width="10.4" height="8.5" viewBox="0 0 10 9" preserveAspectRatio="none" fill="#5f656b"><g fill="none" stroke="currentColor" stroke-width="1.05" stroke-linecap="round"><path d="M3.44 6.34A2.2 2.2 0 0 1 6.56 6.34"/><path d="M1.89 4.79A4.4 4.4 0 0 1 8.11 4.79"/><path d="M.4 3.23A6.6 6.6 0 0 1 9.6 3.23"/></g><circle cx="5" cy="7.9" r=".85"/></svg>
<svg class="mi" style="left:29.5px;top:5.050000000000006px;color:#d5d9de" width="9.5" height="8.3" viewBox="0 0 10 9" preserveAspectRatio="none" fill="#d5d9de"><rect x=".6" y="1.200" width="8.800" height="6.600" rx=".6"/><path d="M2.300 2.600v3.800M4.100 2.600v3.800M5.900 2.600v3.800M7.700 2.600v3.800" stroke="#272c30" stroke-width=".7"/></svg>
<span class="t" id="f26" style="left:47.50px;top:6.20px;font-size:8.2px;color:#d5d9de;font-weight:bold;transform:scaleX(0.9296);">NAS - Synology</span>
</div>
<div class="nd" style="left:1276.0px;top:114.65px;height:17.4px;border-radius:8.70px;">
<svg class="mi" style="left:11.6px;top:4.9500000000000055px;color:#82302a" width="10.4" height="8.5" viewBox="0 0 10 9" preserveAspectRatio="none" fill="#82302a"><g fill="none" stroke="currentColor" stroke-width="1.05" stroke-linecap="round"><path d="M3.44 6.34A2.2 2.2 0 0 1 6.56 6.34"/><path d="M1.89 4.79A4.4 4.4 0 0 1 8.11 4.79"/><path d="M.4 3.23A6.6 6.6 0 0 1 9.6 3.23"/></g><circle cx="5" cy="7.9" r=".85"/></svg>
<svg class="mi" style="left:29.5px;top:5.050000000000006px;color:#a4aab1" width="9.5" height="8.3" viewBox="0 0 10 9" preserveAspectRatio="none" fill="#a4aab1"><path d="M3.200.2 5 1.800 6.800.2l.5.500L6 2h2.800c.5 0 .9.400.9.900v5c0 .5-.4.900-.9.900H1.200C.7 8.800.3 8.400.3 7.900v-5c0-.5.4-.9.9-.9H4L2.700.7z"/><rect x="1.200" y="2.900" width="6" height="5" rx=".4" fill="#272c30"/></svg>
<span class="t" id="f27" style="left:47.50px;top:6.35px;font-size:8.2px;color:#d5d9de;font-weight:bold;transform:scaleX(0.9248);">TV - Frame LAN</span>
</div>
<div class="nd" style="left:1276.0px;top:128.50px;height:17.4px;border-radius:8.70px;">
<svg class="mi" style="left:11.6px;top:4.9500000000000055px;color:#82302a" width="10.4" height="8.5" viewBox="0 0 10 9" preserveAspectRatio="none" fill="#82302a"><g fill="none" stroke="currentColor" stroke-width="1.05" stroke-linecap="round"><path d="M3.44 6.34A2.2 2.2 0 0 1 6.56 6.34"/><path d="M1.89 4.79A4.4 4.4 0 0 1 8.11 4.79"/><path d="M.4 3.23A6.6 6.6 0 0 1 9.6 3.23"/></g><circle cx="5" cy="7.9" r=".85"/></svg>
<svg class="mi" style="left:29.5px;top:5.050000000000006px;color:#a4aab1" width="9.5" height="8.3" viewBox="0 0 10 9" preserveAspectRatio="none" fill="#a4aab1"><path d="M1.800.300c1.300-.100 2.500.500 3.200 1.400C5.700.800 6.900.200 8.200.300 8.100 1.500 7.500 2.400 6.600 2.900 8 3.500 8.900 4.700 8.900 6 8.900 7.700 7.200 8.900 5 8.900S1.100 7.700 1.100 6C1.100 4.700 2 3.500 3.400 2.900 2.500 2.400 1.900 1.500 1.800.3z"/><g fill="#272c30"><circle cx="5" cy="3.900" r=".95"/><circle cx="3" cy="5.600" r=".9"/><circle cx="7" cy="5.600" r=".9"/><circle cx="5" cy="6" r=".8"/><circle cx="3.900" cy="7.600" r=".75"/><circle cx="6.100" cy="7.600" r=".75"/><path d="M3.200 1.100 4.700 2.300M6.800 1.100 5.300 2.300" stroke="#272c30" stroke-width=".5"/></g></svg>
<span class="t" id="f28" style="left:47.50px;top:6.50px;font-size:8.2px;color:#d5d9de;font-weight:bold;transform:scaleX(0.9403);">Raspberry Pi B</span>
</div>
<div class="nd" style="left:1276.0px;top:141.60px;height:17.4px;border-radius:8.70px;">
<svg class="mi" style="left:12.4px;top:4.750000000000005px;color:#8f959c" width="9.4" height="8.2" viewBox="0 0 10 9" preserveAspectRatio="none" fill="#8f959c"><path d="M.7 3.600h1.100V2.300h1.200V1h4v1.300h1.200v1.300h1.100V8.300H.7z"/><path d="M2.300 8.300V6.200h.9v2.100zm1.900 0V6.200h.9v2.100zm1.900 0V6.200h.9v2.100z" fill="#272c30"/><rect x="1.600" y="4.300" width="6.800" height=".8" fill="#272c30" opacity=".55"/></svg>
<svg class="mi" style="left:29.35px;top:5.050000000000006px;color:#d5d9de" width="9.8" height="8.3" viewBox="0 0 10 9" preserveAspectRatio="none" fill="#d5d9de"><path d="M1.300 2.800h7.400L10 4.200v2.300H0V4.200z"/><rect x="1.200" y="4.700" width="3.500" height=".8" fill="#272c30"/><rect x="7" y="4.700" width=".8" height=".8" fill="#272c30"/></svg>
<span class="t" id="f29" style="left:46.70px;top:6.40px;font-size:8.2px;color:#d5d9de;font-weight:bold;transform:scaleX(0.9322);">PC - NUC old</span>
<i class="tg" style="left:166.5px;top:6.800000000000006px"></i>
</div>
<div class="nd" style="left:1276.0px;top:156.20px;height:17.4px;border-radius:8.70px;">
<svg class="mi" style="left:11.6px;top:4.9500000000000055px;color:#82302a" width="10.4" height="8.5" viewBox="0 0 10 9" preserveAspectRatio="none" fill="#82302a"><g fill="none" stroke="currentColor" stroke-width="1.05" stroke-linecap="round"><path d="M3.44 6.34A2.2 2.2 0 0 1 6.56 6.34"/><path d="M1.89 4.79A4.4 4.4 0 0 1 8.11 4.79"/><path d="M.4 3.23A6.6 6.6 0 0 1 9.6 3.23"/></g><circle cx="5" cy="7.9" r=".85"/></svg>
<svg class="mi" style="left:29.5px;top:5.050000000000006px;color:#e8492f" width="9.5" height="8.3" viewBox="0 0 10 9" preserveAspectRatio="none" fill="#e8492f"><path d="M9.600 6.700 7.600 5.800c-.2-.1-.4 0-.5.100l-.9 1.100C4.800 6.300 3.700 5.200 3 3.800l1.100-.9c.2-.1.200-.3.100-.5L3.300.400C3.200.2 3 .1 2.800.1L.9.500C.7.600.5.800.5 1c0 4.400 3.600 7.900 7.900 7.900.2 0 .4-.1.500-.4l.4-1.900c.600-.2.500-.4.300.1z"/></svg>
<span class="t" id="f30" style="left:47.50px;top:5.80px;font-size:8.2px;color:#d5d9de;font-weight:bold;transform:scaleX(0.9627);">Pixel-3a</span>
</div>
<div class="nd" style="left:1276.0px;top:170.05px;height:17.4px;border-radius:8.70px;">
<span class="t" id="f31" style="left:12.00px;top:5.95px;font-size:8.2px;color:#d9a8a4;font-weight:bold;transform:scaleX(0.8550);">None</span>
<svg class="mi" style="left:29.5px;top:5.050000000000006px;color:#a4aab1" width="9.5" height="8.3" viewBox="0 0 10 9" preserveAspectRatio="none" fill="#a4aab1"><path d="M3.200.2 5 1.800 6.800.2l.5.500L6 2h2.800c.5 0 .9.400.9.900v5c0 .5-.4.900-.9.900H1.200C.7 8.800.3 8.400.3 7.900v-5c0-.5.4-.9.9-.9H4L2.700.7z"/><rect x="1.200" y="2.900" width="6" height="5" rx=".4" fill="#272c30"/></svg>
<span class="t" id="f32" style="left:46.70px;top:5.95px;font-size:8.2px;color:#d5d9de;font-weight:bold;transform:scaleX(0.9508);">Chromecast</span>
</div>
<div class="nd" style="left:1276.0px;top:197.75px;height:17.4px;border-radius:8.70px;">
<svg class="mi" style="left:11.6px;top:4.9500000000000055px;color:#5f656b" width="10.4" height="8.5" viewBox="0 0 10 9" preserveAspectRatio="none" fill="#5f656b"><g fill="none" stroke="currentColor" stroke-width="1.05" stroke-linecap="round"><path d="M3.44 6.34A2.2 2.2 0 0 1 6.56 6.34"/><path d="M1.89 4.79A4.4 4.4 0 0 1 8.11 4.79"/><path d="M.4 3.23A6.6 6.6 0 0 1 9.6 3.23"/></g><circle cx="5" cy="7.9" r=".85"/></svg>
<svg class="mi" style="left:29.5px;top:5.050000000000006px;color:#d5d9de" width="9.5" height="8.3" viewBox="0 0 10 9" preserveAspectRatio="none" fill="#d5d9de"><path d="M5 .1c1.700 0 3 1.300 3 3 0 1-.5 1.700-1 2.300-.3.400-.5.800-.5 1.200h-3c0-.4-.2-.8-.5-1.200C2.500 4.800 2 4.100 2 3.100c0-1.700 1.300-3 3-3z"/><path d="M3.600 7.100h2.800v.9c0 .5-.4.900-.9.900h-1c-.5 0-.9-.4-.9-.9z"/></svg>
<span class="t" id="f33" style="left:47.50px;top:6.25px;font-size:8.2px;color:#d5d9de;font-weight:bold;transform:scaleX(0.9655);">Light - Sideboard WiFi</span>
</div>
<div class="nd" style="left:1276.0px;top:211.60px;height:17.4px;border-radius:8.70px;">
<svg class="mi" style="left:11.6px;top:4.949999999999977px;color:#82302a" width="10.4" height="8.5" viewBox="0 0 10 9" preserveAspectRatio="none" fill="#82302a"><g fill="none" stroke="currentColor" stroke-width="1.05" stroke-linecap="round"><path d="M3.44 6.34A2.2 2.2 0 0 1 6.56 6.34"/><path d="M1.89 4.79A4.4 4.4 0 0 1 8.11 4.79"/><path d="M.4 3.23A6.6 6.6 0 0 1 9.6 3.23"/></g><circle cx="5" cy="7.9" r=".85"/></svg>
<svg class="mi" style="left:29.5px;top:5.049999999999978px;color:#a4aab1" width="9.5" height="8.3" viewBox="0 0 10 9" preserveAspectRatio="none" fill="#a4aab1"><circle cx="5" cy="3.300" r="3.100"/><circle cx="5" cy="3.300" r="2.100" fill="#272c30"/><circle cx="5" cy="3.300" r="1.100"/><path d="M3 6.300h4l1 2.500H2z"/><path d="M3.800 7h2.400l.4 1.100H3.400z" fill="#272c30"/></svg>
<span class="t" id="f34" style="left:47.50px;top:6.40px;font-size:8.2px;color:#d5d9de;font-weight:bold;transform:scaleX(0.9484);">Camera - E1</span>
</div>
<div class="nd" style="left:1276.0px;top:225.45px;height:17.4px;border-radius:8.70px;">
<svg class="mi" style="left:11.6px;top:4.949999999999977px;color:#82302a" width="10.4" height="8.5" viewBox="0 0 10 9" preserveAspectRatio="none" fill="#82302a"><g fill="none" stroke="currentColor" stroke-width="1.05" stroke-linecap="round"><path d="M3.44 6.34A2.2 2.2 0 0 1 6.56 6.34"/><path d="M1.89 4.79A4.4 4.4 0 0 1 8.11 4.79"/><path d="M.4 3.23A6.6 6.6 0 0 1 9.6 3.23"/></g><circle cx="5" cy="7.9" r=".85"/></svg>
<svg class="mi" style="left:29.5px;top:5.049999999999978px;color:#e8492f" width="9.5" height="8.3" viewBox="0 0 10 9" preserveAspectRatio="none" fill="#e8492f"><path d="M5 .1c1.700 0 3 1.300 3 3 0 1-.5 1.700-1 2.300-.3.400-.5.800-.5 1.200h-3c0-.4-.2-.8-.5-1.200C2.500 4.800 2 4.100 2 3.100c0-1.700 1.300-3 3-3z"/><path d="M3.600 7.100h2.800v.9c0 .5-.4.900-.9.900h-1c-.5 0-.9-.4-.9-.9z"/></svg>
<span class="t" id="f35" style="left:47.50px;top:6.55px;font-size:8.2px;color:#d5d9de;font-weight:bold;transform:scaleX(0.9582);">Light - bedside B WiFi</span>
</div>
<div class="nd" style="left:1276.0px;top:239.30px;height:17.4px;border-radius:8.70px;">
<svg class="mi" style="left:11.6px;top:4.949999999999977px;color:#5f656b" width="10.4" height="8.5" viewBox="0 0 10 9" preserveAspectRatio="none" fill="#5f656b"><g fill="none" stroke="currentColor" stroke-width="1.05" stroke-linecap="round"><path d="M3.44 6.34A2.2 2.2 0 0 1 6.56 6.34"/><path d="M1.89 4.79A4.4 4.4 0 0 1 8.11 4.79"/><path d="M.4 3.23A6.6 6.6 0 0 1 9.6 3.23"/></g><circle cx="5" cy="7.9" r=".85"/></svg>
<svg class="mi" style="left:29.5px;top:5.049999999999978px;color:#d5d9de" width="9.5" height="8.3" viewBox="0 0 10 9" preserveAspectRatio="none" fill="#d5d9de"><path d="M.3 1h6.200v4.800H.3z"/><path d="M1.100 1.800h4.600V5H1.100z" fill="#272c30"/><path d="M2.600 5.800h1.600v1h1v.8H1.600v-.8h1z"/><rect x="7.300" y=".8" width="2.400" height="7" rx=".4"/><rect x="8" y="1.800" width="1" height=".6" fill="#272c30"/><rect x="8" y="6" width="1" height=".8" fill="#272c30"/></svg>
<span class="t" id="f36" style="left:47.50px;top:5.70px;font-size:8.2px;color:#d5d9de;font-weight:bold;transform:scaleX(0.9290);">PC - S WiFi</span>
</div>
<div class="nd" style="left:1276.0px;top:253.15px;height:17.4px;border-radius:8.70px;">
<svg class="mi" style="left:11.6px;top:4.949999999999977px;color:#82302a" width="10.4" height="8.5" viewBox="0 0 10 9" preserveAspectRatio="none" fill="#82302a"><g fill="none" stroke="currentColor" stroke-width="1.05" stroke-linecap="round"><path d="M3.44 6.34A2.2 2.2 0 0 1 6.56 6.34"/><path d="M1.89 4.79A4.4 4.4 0 0 1 8.11 4.79"/><path d="M.4 3.23A6.6 6.6 0 0 1 9.6 3.23"/></g><circle cx="5" cy="7.9" r=".85"/></svg>
<svg class="mi" style="left:29.5px;top:5.049999999999978px;color:#e8492f" width="9.5" height="8.3" viewBox="0 0 10 9" preserveAspectRatio="none" fill="#e8492f"><path d="M5 .1c1.700 0 3 1.300 3 3 0 1-.5 1.700-1 2.300-.3.400-.5.800-.5 1.200h-3c0-.4-.2-.8-.5-1.200C2.500 4.800 2 4.100 2 3.100c0-1.700 1.300-3 3-3z"/><path d="M3.600 7.100h2.800v.9c0 .5-.4.900-.9.900h-1c-.5 0-.9-.4-.9-.9z"/></svg>
<span class="t" id="f37" style="left:47.50px;top:5.85px;font-size:8.2px;color:#d5d9de;font-weight:bold;transform:scaleX(0.9551);">Light - bedside S WiFi</span>
</div>
<div class="nd" style="left:1276.0px;top:267.00px;height:17.4px;border-radius:8.70px;">
<svg class="mi" style="left:11.6px;top:4.949999999999977px;color:#5f656b" width="10.4" height="8.5" viewBox="0 0 10 9" preserveAspectRatio="none" fill="#5f656b"><g fill="none" stroke="currentColor" stroke-width="1.05" stroke-linecap="round"><path d="M3.44 6.34A2.2 2.2 0 0 1 6.56 6.34"/><path d="M1.89 4.79A4.4 4.4 0 0 1 8.11 4.79"/><path d="M.4 3.23A6.6 6.6 0 0 1 9.6 3.23"/></g><circle cx="5" cy="7.9" r=".85"/></svg>
<svg class="mi" style="left:29.5px;top:5.049999999999978px;color:#d5d9de" width="9.5" height="8.3" viewBox="0 0 10 9" preserveAspectRatio="none" fill="#d5d9de"><rect x="1" y=".3" width="1" height="2.300"/><rect x="3.700" y=".3" width="1" height="2.300"/><path d="M.2 2.600h5.300v1.800c0 1.200-.8 2.100-1.900 2.400V8.700H2.100V6.800C1 6.500.2 5.600.2 4.400z"/><circle cx="7.600" cy="6" r="2.300"/><circle cx="7.600" cy="6" r="1" fill="#272c30"/></svg>
<span class="t" id="f38" style="left:47.50px;top:6.00px;font-size:8.2px;color:#d5d9de;font-weight:bold;transform:scaleX(0.9520);">Plug - Washroom</span>
</div>
<div class="nd" style="left:1276.0px;top:280.85px;height:17.4px;border-radius:8.70px;">
<svg class="mi" style="left:11.6px;top:4.949999999999977px;color:#5f656b" width="10.4" height="8.5" viewBox="0 0 10 9" preserveAspectRatio="none" fill="#5f656b"><g fill="none" stroke="currentColor" stroke-width="1.05" stroke-linecap="round"><path d="M3.44 6.34A2.2 2.2 0 0 1 6.56 6.34"/><path d="M1.89 4.79A4.4 4.4 0 0 1 8.11 4.79"/><path d="M.4 3.23A6.6 6.6 0 0 1 9.6 3.23"/></g><circle cx="5" cy="7.9" r=".85"/></svg>
<svg class="mi" style="left:29.5px;top:5.049999999999978px;color:#a4aab1" width="9.5" height="8.3" viewBox="0 0 10 9" preserveAspectRatio="none" fill="#a4aab1"><rect x="1.800" y=".2" width="6.400" height="8.600" rx="1.600"/><rect x="2.700" y="1.100" width="4.600" height="6.800" rx="1" fill="#272c30"/><rect x="2.200" y="3.400" width="5.600" height=".8"/></svg>
<span class="t" id="f39" style="left:47.50px;top:6.15px;font-size:8.2px;color:#d5d9de;font-weight:bold;transform:scaleX(0.9570);">Speaker - Google Display</span>
</div>
<div class="nd" style="left:1276.0px;top:294.70px;height:17.4px;border-radius:8.70px;">
<svg class="mi" style="left:11.6px;top:4.949999999999977px;color:#5f656b" width="10.4" height="8.5" viewBox="0 0 10 9" preserveAspectRatio="none" fill="#5f656b"><g fill="none" stroke="currentColor" stroke-width="1.05" stroke-linecap="round"><path d="M3.44 6.34A2.2 2.2 0 0 1 6.56 6.34"/><path d="M1.89 4.79A4.4 4.4 0 0 1 8.11 4.79"/><path d="M.4 3.23A6.6 6.6 0 0 1 9.6 3.23"/></g><circle cx="5" cy="7.9" r=".85"/></svg>
<svg class="mi" style="left:29.5px;top:5.049999999999978px;color:#d5d9de" width="9.5" height="8.3" viewBox="0 0 10 9" preserveAspectRatio="none" fill="#d5d9de"><path d="M.3 1h6.200v4.800H.3z"/><path d="M1.100 1.800h4.600V5H1.100z" fill="#272c30"/><path d="M2.600 5.800h1.600v1h1v.8H1.600v-.8h1z"/><rect x="7.300" y=".8" width="2.400" height="7" rx=".4"/><rect x="8" y="1.800" width="1" height=".6" fill="#272c30"/><rect x="8" y="6" width="1" height=".8" fill="#272c30"/></svg>
<span class="t" id="f40" style="left:47.50px;top:6.30px;font-size:8.2px;color:#d5d9de;font-weight:bold;transform:scaleX(0.9195);">PC - B WiFi</span>
</div>
<div class="nd" style="left:1276.0px;top:308.55px;height:17.4px;border-radius:8.70px;">
<svg class="mi" style="left:11.6px;top:4.949999999999977px;color:#5f656b" width="10.4" height="8.5" viewBox="0 0 10 9" preserveAspectRatio="none" fill="#5f656b"><g fill="none" stroke="currentColor" stroke-width="1.05" stroke-linecap="round"><path d="M3.44 6.34A2.2 2.2 0 0 1 6.56 6.34"/><path d="M1.89 4.79A4.4 4.4 0 0 1 8.11 4.79"/><path d="M.4 3.23A6.6 6.6 0 0 1 9.6 3.23"/></g><circle cx="5" cy="7.9" r=".85"/></svg>
<svg class="mi" style="left:29.5px;top:5.049999999999978px;color:#d5d9de" width="9.5" height="8.3" viewBox="0 0 10 9" preserveAspectRatio="none" fill="#d5d9de"><path d="M5 .1c1.700 0 3 1.300 3 3 0 1-.5 1.700-1 2.300-.3.400-.5.800-.5 1.200h-3c0-.4-.2-.8-.5-1.200C2.500 4.800 2 4.100 2 3.100c0-1.700 1.300-3 3-3z"/><path d="M3.600 7.100h2.800v.9c0 .5-.4.900-.9.900h-1c-.5 0-.9-.4-.9-.9z"/></svg>
<span class="t" id="f41" style="left:47.50px;top:6.45px;font-size:8.2px;color:#d5d9de;font-weight:bold;transform:scaleX(0.9663);">Light - Dining light WiFi</span>
</div>
<div class="nd" style="left:1276.0px;top:322.40px;height:17.4px;border-radius:8.70px;">
<svg class="mi" style="left:11.6px;top:4.949999999999977px;color:#5f656b" width="10.4" height="8.5" viewBox="0 0 10 9" preserveAspectRatio="none" fill="#5f656b"><g fill="none" stroke="currentColor" stroke-width="1.05" stroke-linecap="round"><path d="M3.44 6.34A2.2 2.2 0 0 1 6.56 6.34"/><path d="M1.89 4.79A4.4 4.4 0 0 1 8.11 4.79"/><path d="M.4 3.23A6.6 6.6 0 0 1 9.6 3.23"/></g><circle cx="5" cy="7.9" r=".85"/></svg>
<svg class="mi" style="left:29.5px;top:5.049999999999978px;color:#d5d9de" width="9.5" height="8.3" viewBox="0 0 10 9" preserveAspectRatio="none" fill="#d5d9de"><path d="M5 .1c1.700 0 3 1.300 3 3 0 1-.5 1.700-1 2.300-.3.400-.5.800-.5 1.200h-3c0-.4-.2-.8-.5-1.200C2.500 4.800 2 4.100 2 3.100c0-1.700 1.300-3 3-3z"/><path d="M3.600 7.100h2.800v.9c0 .5-.4.900-.9.900h-1c-.5 0-.9-.4-.9-.9z"/></svg>
<span class="t" id="f42" style="left:47.50px;top:6.60px;font-size:8.2px;color:#d5d9de;font-weight:bold;transform:scaleX(0.9566);">Light - Study WiFi</span>
</div>
<div class="nd" style="left:1276.0px;top:336.25px;height:17.4px;border-radius:8.70px;">
<svg class="mi" style="left:11.6px;top:4.949999999999977px;color:#5f656b" width="10.4" height="8.5" viewBox="0 0 10 9" preserveAspectRatio="none" fill="#5f656b"><g fill="none" stroke="currentColor" stroke-width="1.05" stroke-linecap="round"><path d="M3.44 6.34A2.2 2.2 0 0 1 6.56 6.34"/><path d="M1.89 4.79A4.4 4.4 0 0 1 8.11 4.79"/><path d="M.4 3.23A6.6 6.6 0 0 1 9.6 3.23"/></g><circle cx="5" cy="7.9" r=".85"/></svg>
<svg class="mi" style="left:29.5px;top:5.049999999999978px;color:#d5d9de" width="9.5" height="8.3" viewBox="0 0 10 9" preserveAspectRatio="none" fill="#d5d9de"><path d="M5 .1c1.700 0 3 1.300 3 3 0 1-.5 1.700-1 2.300-.3.400-.5.800-.5 1.200h-3c0-.4-.2-.8-.5-1.200C2.500 4.800 2 4.100 2 3.100c0-1.700 1.300-3 3-3z"/><path d="M3.600 7.100h2.800v.9c0 .5-.4.900-.9.900h-1c-.5 0-.9-.4-.9-.9z"/></svg>
<span class="t" id="f43" style="left:47.50px;top:5.75px;font-size:8.2px;color:#d5d9de;font-weight:bold;transform:scaleX(0.9762);">Light - ceiling-light-1 WiFi</span>
</div>
<div class="nd" style="left:1276.0px;top:350.10px;height:17.4px;border-radius:8.70px;">
<svg class="mi" style="left:11.6px;top:4.949999999999977px;color:#82302a" width="10.4" height="8.5" viewBox="0 0 10 9" preserveAspectRatio="none" fill="#82302a"><g fill="none" stroke="currentColor" stroke-width="1.05" stroke-linecap="round"><path d="M3.44 6.34A2.2 2.2 0 0 1 6.56 6.34"/><path d="M1.89 4.79A4.4 4.4 0 0 1 8.11 4.79"/><path d="M.4 3.23A6.6 6.6 0 0 1 9.6 3.23"/></g><circle cx="5" cy="7.9" r=".85"/></svg>
<svg class="mi" style="left:29.5px;top:5.049999999999978px;color:#e8492f" width="9.5" height="8.3" viewBox="0 0 10 9" preserveAspectRatio="none" fill="#e8492f"><path d="M5 .1c1.700 0 3 1.300 3 3 0 1-.5 1.700-1 2.300-.3.400-.5.800-.5 1.200h-3c0-.4-.2-.8-.5-1.200C2.500 4.800 2 4.100 2 3.100c0-1.700 1.300-3 3-3z"/><path d="M3.600 7.100h2.800v.9c0 .5-.4.900-.9.900h-1c-.5 0-.9-.4-.9-.9z"/></svg>
<span class="t" id="f44" style="left:47.50px;top:5.90px;font-size:8.2px;color:#d5d9de;font-weight:bold;transform:scaleX(0.9762);">Light - ceiling-light-2 WiFi</span>
</div>
<div class="nd" style="left:1276.0px;top:363.95px;height:17.4px;border-radius:8.70px;">
<svg class="mi" style="left:11.6px;top:4.949999999999977px;color:#5f656b" width="10.4" height="8.5" viewBox="0 0 10 9" preserveAspectRatio="none" fill="#5f656b"><g fill="none" stroke="currentColor" stroke-width="1.05" stroke-linecap="round"><path d="M3.44 6.34A2.2 2.2 0 0 1 6.56 6.34"/><path d="M1.89 4.79A4.4 4.4 0 0 1 8.11 4.79"/><path d="M.4 3.23A6.6 6.6 0 0 1 9.6 3.23"/></g><circle cx="5" cy="7.9" r=".85"/></svg>
<svg class="mi" style="left:29.5px;top:5.049999999999978px;color:#a4aab1" width="9.5" height="8.3" viewBox="0 0 10 9" preserveAspectRatio="none" fill="#a4aab1"><rect x="1.800" y=".2" width="6.400" height="8.600" rx="1.600"/><rect x="2.700" y="1.100" width="4.600" height="6.800" rx="1" fill="#272c30"/><rect x="2.200" y="3.400" width="5.600" height=".8"/></svg>
<span class="t" id="f45" style="left:47.50px;top:6.05px;font-size:8.2px;color:#d5d9de;font-weight:bold;transform:scaleX(0.9609);">Speaker - Google - Black</span>
</div>
<div class="nd" style="left:1276.0px;top:377.80px;height:17.4px;border-radius:8.70px;">
<svg class="mi" style="left:11.6px;top:4.949999999999977px;color:#5f656b" width="10.4" height="8.5" viewBox="0 0 10 9" preserveAspectRatio="none" fill="#5f656b"><g fill="none" stroke="currentColor" stroke-width="1.05" stroke-linecap="round"><path d="M3.44 6.34A2.2 2.2 0 0 1 6.56 6.34"/><path d="M1.89 4.79A4.4 4.4 0 0 1 8.11 4.79"/><path d="M.4 3.23A6.6 6.6 0 0 1 9.6 3.23"/></g><circle cx="5" cy="7.9" r=".85"/></svg>
<svg class="mi" style="left:29.5px;top:5.049999999999978px;color:#d5d9de" width="9.5" height="8.3" viewBox="0 0 10 9" preserveAspectRatio="none" fill="#d5d9de"><path d="M9.600 6.700 7.600 5.800c-.2-.1-.4 0-.5.100l-.9 1.100C4.800 6.300 3.700 5.200 3 3.800l1.100-.9c.2-.1.200-.3.100-.5L3.300.400C3.200.2 3 .1 2.800.1L.9.500C.7.600.5.800.5 1c0 4.400 3.600 7.900 7.900 7.900.2 0 .4-.1.500-.4l.4-1.900c.600-.2.500-.4.300.1z"/></svg>
<span class="t" id="f46" style="left:47.50px;top:6.20px;font-size:8.2px;color:#d5d9de;font-weight:bold;transform:scaleX(0.9614);">Phone - Pixel 6</span>
</div>
<div class="nd" style="left:1276.0px;top:391.65px;height:17.4px;border-radius:8.70px;">
<svg class="mi" style="left:11.6px;top:4.949999999999977px;color:#82302a" width="10.4" height="8.5" viewBox="0 0 10 9" preserveAspectRatio="none" fill="#82302a"><g fill="none" stroke="currentColor" stroke-width="1.05" stroke-linecap="round"><path d="M3.44 6.34A2.2 2.2 0 0 1 6.56 6.34"/><path d="M1.89 4.79A4.4 4.4 0 0 1 8.11 4.79"/><path d="M.4 3.23A6.6 6.6 0 0 1 9.6 3.23"/></g><circle cx="5" cy="7.9" r=".85"/></svg>
<svg class="mi" style="left:29.5px;top:5.049999999999978px;color:#e8492f" width="9.5" height="8.3" viewBox="0 0 10 9" preserveAspectRatio="none" fill="#e8492f"><path d="M9.600 6.700 7.600 5.800c-.2-.1-.4 0-.5.100l-.9 1.100C4.800 6.300 3.700 5.200 3 3.800l1.100-.9c.2-.1.200-.3.100-.5L3.300.400C3.200.2 3 .1 2.800.1L.9.500C.7.600.5.800.5 1c0 4.400 3.600 7.900 7.900 7.900.2 0 .4-.1.500-.4l.4-1.900c.600-.2.500-.4.300.1z"/></svg>
<span class="t" id="f47" style="left:47.50px;top:6.35px;font-size:8.2px;color:#d5d9de;font-weight:bold;transform:scaleX(0.9488);">Phone - Samsung S10</span>
</div>
<div class="nd" style="left:1276.0px;top:405.50px;height:17.4px;border-radius:8.70px;">
<svg class="mi" style="left:11.6px;top:4.949999999999977px;color:#5f656b" width="10.4" height="8.5" viewBox="0 0 10 9" preserveAspectRatio="none" fill="#5f656b"><g fill="none" stroke="currentColor" stroke-width="1.05" stroke-linecap="round"><path d="M3.44 6.34A2.2 2.2 0 0 1 6.56 6.34"/><path d="M1.89 4.79A4.4 4.4 0 0 1 8.11 4.79"/><path d="M.4 3.23A6.6 6.6 0 0 1 9.6 3.23"/></g><circle cx="5" cy="7.9" r=".85"/></svg>
<svg class="mi" style="left:29.35px;top:5.049999999999978px;color:#d5d9de" width="9.8" height="8.3" viewBox="0 0 10 9" preserveAspectRatio="none" fill="#d5d9de"><path d="M1.300 2.800h7.400L10 4.200v2.300H0V4.200z"/><rect x="1.200" y="4.700" width="3.500" height=".8" fill="#272c30"/><rect x="7" y="4.700" width=".8" height=".8" fill="#272c30"/></svg>
<span class="t" id="f48" style="left:47.50px;top:6.50px;font-size:8.2px;color:#d5d9de;font-weight:bold;transform:scaleX(0.9235);">PC - NUC WiFi</span>
</div>
<div class="nd" style="left:1276.0px;top:419.35px;height:17.4px;border-radius:8.70px;">
</div>
<div class="nd" style="left:1592.0px;top:141.90px;height:18.2px;border-radius:9.10px;">
<svg class="mi" style="left:11.6px;top:4.649999999999994px;color:#5f656b" width="10.4" height="8.5" viewBox="0 0 10 9" preserveAspectRatio="none" fill="#5f656b"><g fill="none" stroke="currentColor" stroke-width="1.05" stroke-linecap="round"><path d="M3.44 6.34A2.2 2.2 0 0 1 6.56 6.34"/><path d="M1.89 4.79A4.4 4.4 0 0 1 8.11 4.79"/><path d="M.4 3.23A6.6 6.6 0 0 1 9.6 3.23"/></g><circle cx="5" cy="7.9" r=".85"/></svg>
<svg class="mi" style="left:29.5px;top:4.749999999999995px;color:#5f656b" width="9.5" height="8.3" viewBox="0 0 10 9" preserveAspectRatio="none" fill="#5f656b"><path d="M2.500 2.500v1.500H6V5H2.500v1.500L0 4.500z"/><rect x="6.600" y="4" width="1" height="1"/><rect x="8.200" y="4" width="1" height="1"/></svg>
<span class="t" id="f49" style="left:47.50px;top:6.10px;font-size:8.2px;color:#d5d9de;font-weight:bold;transform:scaleX(0.9175);">VM - NixOS</span>
</div>
</div>
<div id="sb"></div>
<div id="tabs"><div class="on"></div>
<span class="ic" style="left:13.9px;top:10.6px;width:14.2px;height:14.4px;"><svg width="14.2" height="14.4" viewBox="0 0 16 16" fill="#8d969e" preserveAspectRatio="none" style="display:block;color:#8d969e;"><circle cx="8" cy="8" r="8"/><path d="M0 5.300h16M0 10.700h16" stroke="#353c42" stroke-width="1.200" fill="none"/><ellipse cx="8" cy="8" rx="3.100" ry="8.300" stroke="#353c42" stroke-width="1.200" fill="none"/></svg></span>
<span class="t" id="f50" style="left:39.50px;top:16.00px;font-size:14px;color:#8d969e;-webkit-text-stroke:.3px;transform:scaleX(0.9051);">Net - Huawei (1)</span>
<i class="dot" style="left:132px;top:7px;background:#0aa50a"></i>
<span class="ic" style="left:168px;top:10.5px;width:14px;height:15px;"><svg width="14" height="15" viewBox="0 0 14 16" fill="#8d969e" preserveAspectRatio="none" style="display:block;color:#8d969e;"><path d="M7 0 13.300 2.500c.4.200.7.600.7 1 0 6-3.500 10.600-6.500 12.300-.3.200-.7.200-1 0C3.500 14.100 0 9.500 0 3.500c0-.4.3-.8.7-1z"/></svg></span>
<span class="t" id="f51" style="left:193.00px;top:16.00px;font-size:14px;color:#8d969e;-webkit-text-stroke:.3px;transform:scaleX(0.8530);">Net - USG (1)</span>
<i class="dot" style="left:267px;top:7px;background:#0aa50a"></i>
<span class="ic" style="left:302px;top:11px;width:18.5px;height:13px;"><svg width="18.5" height="13" viewBox="0 0 20 14" fill="#8d969e" preserveAspectRatio="none" style="display:block;color:#8d969e;"><path d="M19.800 4.200C14.300-1.100 5.700-1.100.2 4.200c-.2.200-.2.500 0 .7l1 1c.2.200.5.200.7 0 4.500-4.300 11.700-4.300 16.200 0 .2.200.5.200.7 0l1-1c.2-.2.2-.5 0-.7z"/><path d="M16.300 7.800c-3.600-3.400-9-3.400-12.600 0-.2.200-.2.500 0 .7l1 1c.2.200.5.200.7 0 2.600-2.400 6.600-2.400 9.200 0 .2.200.5.200.7 0l1-1c.2-.2.2-.5 0-.7z"/><circle cx="10" cy="12" r="1.900"/></svg></span>
<span class="t" id="f52" style="left:328.00px;top:16.00px;font-size:14px;color:#8d969e;-webkit-text-stroke:.3px;transform:scaleX(0.8633);">Net - AP OLD</span>
<i class="dot" style="left:404px;top:7px;background:#a5291f"></i>
<span class="ic" style="left:441px;top:15px;width:20px;height:14px;"><svg width="20" height="14" viewBox="0 0 20 14" fill="#8d969e" preserveAspectRatio="none" style="display:block;color:#8d969e;"><path d="M4.400.800h11.200c.700 0 1.300.500 1.500 1.100l2 5.600c.100.200.100.400.100.600v3.400c0 .900-.800 1.700-1.700 1.700H2.500c-.900 0-1.700-.800-1.700-1.700V8.100c0-.200 0-.400.100-.600l2-5.600C3.100 1.300 3.700.800 4.400.800z" fill="none" stroke="currentColor" stroke-width="1.500"/><rect x="3" y="6.900" width="14" height="1.100"/><rect x="3" y="9.500" width="1.700" height="1.500"/><rect x="6.050" y="9.500" width="1.700" height="1.500"/><rect x="9.100" y="9.500" width="1.700" height="1.500"/><rect x="12.200" y="9.500" width="1.700" height="1.500"/><rect x="15.300" y="9.500" width="1.700" height="1.500"/></svg></span>
<span class="t" id="f53" style="left:465.70px;top:16.00px;font-size:14px;color:#8d969e;-webkit-text-stroke:.3px;transform:scaleX(0.9074);">Net - Switch - Study (2)</span>
<i class="dot" style="left:597px;top:7px;background:#0aa50a"></i>
<span class="ic" style="left:634.1px;top:15px;width:20px;height:14px;"><svg width="20" height="14" viewBox="0 0 20 14" fill="#d3d8dd" preserveAspectRatio="none" style="display:block;color:#d3d8dd;"><path d="M4.400.800h11.200c.700 0 1.300.500 1.500 1.100l2 5.600c.100.200.100.400.100.600v3.400c0 .900-.800 1.700-1.700 1.700H2.500c-.900 0-1.700-.800-1.700-1.700V8.100c0-.200 0-.400.100-.600l2-5.600C3.100 1.300 3.700.800 4.400.800z" fill="none" stroke="currentColor" stroke-width="1.500"/><rect x="3" y="6.900" width="14" height="1.100"/><rect x="3" y="9.500" width="1.700" height="1.500"/><rect x="6.050" y="9.500" width="1.700" height="1.500"/><rect x="9.100" y="9.500" width="1.700" height="1.500"/><rect x="12.200" y="9.500" width="1.700" height="1.500"/><rect x="15.300" y="9.500" width="1.700" height="1.500"/></svg></span>
<span class="t" id="f54" style="left:658.70px;top:16.00px;font-size:14px;color:#d3d8dd;-webkit-text-stroke:.3px;transform:scaleX(0.8850);">Net - Switch - TV (9)</span>
<i class="dot" style="left:771px;top:7px;background:#0aa50a"></i>
<span class="ic" style="left:808px;top:15px;width:20px;height:14px;"><svg width="20" height="14" viewBox="0 0 20 14" fill="#8d969e" preserveAspectRatio="none" style="display:block;color:#8d969e;"><path d="M4.400.800h11.200c.700 0 1.300.500 1.500 1.100l2 5.600c.100.200.100.400.100.600v3.400c0 .900-.800 1.700-1.700 1.700H2.500c-.900 0-1.700-.800-1.700-1.700V8.100c0-.200 0-.400.100-.600l2-5.600C3.100 1.300 3.700.800 4.400.800z" fill="none" stroke="currentColor" stroke-width="1.500"/><rect x="3" y="6.900" width="14" height="1.100"/><rect x="3" y="9.500" width="1.700" height="1.500"/><rect x="6.050" y="9.500" width="1.700" height="1.500"/><rect x="9.100" y="9.500" width="1.700" height="1.500"/><rect x="12.200" y="9.500" width="1.700" height="1.500"/><rect x="15.300" y="9.500" width="1.700" height="1.500"/></svg></span>
<span class="t" id="f55" style="left:832.70px;top:16.00px;font-size:14px;color:#8d969e;-webkit-text-stroke:.3px;transform:scaleX(0.8811);">Net - Switch - POE (4)</span>
<i class="dot" style="left:955px;top:7px;background:#0aa50a"></i>
<span class="ic" style="left:990.4px;top:11px;width:18.5px;height:13px;"><svg width="18.5" height="13" viewBox="0 0 20 14" fill="#8d969e" preserveAspectRatio="none" style="display:block;color:#8d969e;"><path d="M19.800 4.200C14.300-1.100 5.700-1.100.2 4.200c-.2.200-.2.500 0 .7l1 1c.2.200.5.200.7 0 4.500-4.300 11.700-4.300 16.200 0 .2.200.5.200.7 0l1-1c.2-.2.2-.5 0-.7z"/><path d="M16.300 7.800c-3.600-3.400-9-3.400-12.600 0-.2.200-.2.500 0 .7l1 1c.2.200.5.200.7 0 2.600-2.400 6.600-2.400 9.200 0 .2.200.5.200.7 0l1-1c.2-.2.2-.5 0-.7z"/><circle cx="10" cy="12" r="1.900"/></svg></span>
<span class="t" id="f56" style="left:1016.40px;top:16.00px;font-size:14px;color:#8d969e;-webkit-text-stroke:.3px;transform:scaleX(0.8752);">Net - AP (42)</span>
<i class="dot" style="left:1087px;top:7px;background:#0aa50a"></i>
<span class="ic" style="left:1124.4px;top:17.5px;width:18.7px;height:8.75px;"><svg width="18.7" height="8.75" viewBox="0 0 18.700 8.750" fill="#8d969e" preserveAspectRatio="none" style="display:block;color:#8d969e;"><path d="M0 1.400 10 0 18.700 1.400V7.400L8.500 8.750 0 7.400Z"/><rect x="10.300" y="4.300" width="6.300" height="1.300" rx=".4" fill="#353c42"/><rect x="3.700" y="4.200" width="1" height="1.600" fill="#353c42"/><rect x="1.200" y="4.500" width=".8" height=".9" fill="#353c42"/></svg></span>
<span class="t" id="f57" style="left:1148.70px;top:16.00px;font-size:14px;color:#8d969e;-webkit-text-stroke:.3px;transform:scaleX(0.8630);">PC - NUC old (1)</span>
<i class="dot" style="left:1240px;top:7px;background:#0aa50a"></i>
</div>
<div id="pane">
<span class="ic" style="left:10px;top:21px;width:22px;height:19.5px;"><svg width="22" height="19.5" viewBox="0 0 22 19" fill="#bec5cd" preserveAspectRatio="none" style="display:block;color:#bec5cd;"><path fill-rule="evenodd" d="M2 0h18c1.100 0 2 .9 2 2v4.500c0 1.100-.9 2-2 2H2c-1.100 0-2-.9-2-2V2C0 .9.900 0 2 0zm13.500 3.200a1.100 1.100 0 1 0 0 2.200 1.100 1.100 0 0 0 0-2.200zm3 0a1.100 1.100 0 1 0 0 2.200 1.100 1.100 0 0 0 0-2.200zM2 10.500h18c1.100 0 2 .9 2 2V17c0 1.100-.9 2-2 2H2c-1.100 0-2-.9-2-2v-4.500c0-1.100.9-2 2-2zm13.500 3.200a1.100 1.100 0 1 0 0 2.200 1.100 1.100 0 0 0 0-2.200zm3 0a1.100 1.100 0 1 0 0 2.200 1.100 1.100 0 0 0 0-2.200z"/></svg></span>
<span class="t" id="f58" style="left:37.50px;top:21.00px;font-size:21px;color:#c8ced4;transform:scaleX(0.9936);">Network node</span>
<div class="hr" style="top:53px"></div>
<div class="row st" style="top:74px;height:28px">
<span class="t" id="f59" style="left:4.50px;top:6.00px;font-size:14px;color:#dde1e5;font-weight:bold;transform:scaleX(0.9505);">Network node</span>
<span class="t" id="f60" style="left:434.40px;top:6.00px;font-size:14px;color:#3c8dbc;-webkit-text-stroke:.3px;transform:scaleX(0.8953);">Net - Switch - TV</span>
</div>
<div class="row" style="top:102px;height:28px">
<span class="t" id="f61" style="left:4.50px;top:6.00px;font-size:14px;color:#dde1e5;font-weight:bold;transform:scaleX(0.8388);">MAC</span>
<span class="t" id="f62" style="left:434.40px;top:6.00px;font-size:14px;color:#c8ced3;-webkit-text-stroke:.3px;transform:scaleX(0.9189);">f4:92:bf:a3:f3:56</span>
</div>
<div class="row st" style="top:130px;height:28px">
<span class="t" id="f63" style="left:4.50px;top:6.00px;font-size:14px;color:#dde1e5;font-weight:bold;transform:scaleX(0.9402);">Type</span>
<span class="t" id="f64" style="left:434.40px;top:6.00px;font-size:14px;color:#c8ced3;-webkit-text-stroke:.3px;transform:scaleX(0.9458);">Switch</span>
</div>
<div class="row" style="top:158px;height:28px">
<span class="t" id="f65" style="left:4.50px;top:6.00px;font-size:14px;color:#dde1e5;font-weight:bold;transform:scaleX(0.9493);">State</span>
<span class="bdg" style="left:434px;top:6px;width:60px;background:#00a000"></span>
<span class="t" id="f66" style="left:446.80px;top:9.00px;font-size:11px;color:#fff;font-weight:bold;transform:scaleX(1.0282);">Online</span>
</div>
<div class="row st" style="top:186px;height:28px">
<span class="t" id="f67" style="left:4.50px;top:6.00px;font-size:14px;color:#dde1e5;font-weight:bold;transform:scaleX(0.9403);">Parent network device</span>
<span class="t" id="f68" style="left:434.40px;top:6.00px;font-size:14px;color:#3c8dbc;font-weight:bold;transform:scaleX(0.9212);">Net - Switch - POE</span>
<span class="ic" style="left:550px;top:6.7px;width:12.5px;height:12px;"><svg width="12.5" height="12" viewBox="0 0 12 12" fill="#3c8dbc" preserveAspectRatio="none" style="display:block;color:#3c8dbc;"><path fill-rule="evenodd" d="M1.500 0h9c.8 0 1.500.7 1.500 1.500v9c0 .8-.7 1.500-1.500 1.500h-9C.7 12 0 11.300 0 10.500v-9C0 .7.700 0 1.500 0zM5 3v1.400h2.100L3.200 8.300l1 1 3.900-3.900V7.500h1.400V3z"/></svg></span>
</div>
<span class="ic" style="left:10px;top:275px;width:27px;height:21.5px;"><svg width="27" height="21.5" viewBox="0 0 27 21.500" fill="#bec5cd" preserveAspectRatio="none" style="display:block;color:#bec5cd;"><rect x="8.800" y="0" width="9.400" height="7.400" rx="1.300"/><rect x="0" y="12.400" width="8.200" height="9.100" rx="1.300"/><rect x="9.400" y="12.400" width="8.200" height="9.100" rx="1.300"/><rect x="18.800" y="12.400" width="8.200" height="9.100" rx="1.300"/><path d="M12.500 7h2v2.200h8.400c.6 0 1 .4 1 1v2.400h-2v-1.500h-7.400v1.500h-2v-1.500H5.100v1.500h-2v-2.400c0-.6.4-1 1-1h8.400z"/></svg></span>
<span class="t" id="f69" style="left:42.50px;top:277.00px;font-size:22.4px;color:#c8ced4;transform:scaleX(0.9819);">Connected devices</span>
<div class="hr" style="top:320px"></div>
<span class="t" id="f70" style="left:18.25px;top:351.00px;font-size:14px;color:#dde1e5;font-weight:bold;transform:scaleX(0.9554);">Port</span>
<span class="t" id="f71" style="left:233.25px;top:351.00px;font-size:14px;color:#dde1e5;font-weight:bold;transform:scaleX(0.9493);">State</span>
<span class="t" id="f72" style="left:448.50px;top:351.00px;font-size:14px;color:#dde1e5;font-weight:bold;transform:scaleX(0.9337);">Hostname</span>
<span class="ic" style="left:516.1px;top:351px;width:16.3px;height:13.3px;"><svg width="16.3" height="13.3" viewBox="0 0 16.300 13.300" fill="#dde1e5" preserveAspectRatio="none" style="display:block;color:#dde1e5;"><path d="M3.450 0 6.900 3.900 5.900 4.900 4.550 3.400V13.300H2.350V3.400L1 4.900 0 3.900Z"/><rect x="7.350" y=".6" width="3.550" height="1.700" rx=".5"/><rect x="7.350" y="4" width="5" height="1.750" rx=".5"/><rect x="7.350" y="7.600" width="6.750" height="1.750" rx=".5"/><rect x="7.350" y="11" width="8.950" height="2" rx=".5"/></svg></span>
<span class="t" id="f73" style="left:878.75px;top:351.00px;font-size:14px;color:#dde1e5;font-weight:bold;transform:scaleX(0.8954);">IP</span>
<span class="ic" style="left:893.9px;top:351px;width:16.3px;height:13.3px;"><svg width="16.3" height="13.3" viewBox="0 0 16.300 13.300" fill="#dde1e5" preserveAspectRatio="none" style="display:block;color:#dde1e5;"><path d="M3.450 0 6.900 3.900 5.900 4.900 4.550 3.400V13.300H2.350V3.400L1 4.900 0 3.900Z"/><rect x="7.350" y=".6" width="3.550" height="1.700" rx=".5"/><rect x="7.350" y="4" width="5" height="1.750" rx=".5"/><rect x="7.350" y="7.600" width="6.750" height="1.750" rx=".5"/><rect x="7.350" y="11" width="8.950" height="2" rx=".5"/></svg></span>
<span class="t" id="f74" style="left:1093.00px;top:351.00px;font-size:14px;color:#dde1e5;font-weight:bold;transform:scaleX(0.9296);">Manage assignment</span>
<div class="hr" style="top:377px;height:2px;background:#f4f4f4"></div>
<div class="row" style="top:378px;height:38px">
<span class="t" id="f75" style="left:97.50px;top:6.00px;font-size:14px;color:#c8ced3;-webkit-text-stroke:.3px;transform:scaleX(0.8889);">N/A</span>
<span class="bdg" style="left:219px;top:5px;width:60px;background:#00a000"></span>
<span class="t" id="f76" style="left:231.40px;top:9.00px;font-size:11px;color:#fff;font-weight:bold;transform:scaleX(1.0282);">Online</span>
<span class="t" id="f77" style="left:440.30px;top:6.00px;font-size:14px;color:#3c8dbc;font-weight:bold;transform:scaleX(0.9224);">Console - Nvidia Shield TV</span>
<span class="t" id="f78" style="left:864.30px;top:6.00px;font-size:14px;color:#c8ced3;-webkit-text-stroke:.3px;transform:scaleX(0.8880);">192.168.1.105</span>
<span class="btn" style="left:1079px;top:4px"></span>
<span class="t" id="f79" style="left:1090.60px;top:13.00px;font-size:11.5px;color:#fff;font-weight:bold;transform:scaleX(0.8790);">Unassign</span>
</div>
<div class="row st" style="top:416px;height:38px">
<span class="t" id="f80" style="left:97.50px;top:6.00px;font-size:14px;color:#c8ced3;-webkit-text-stroke:.3px;transform:scaleX(0.8889);">N/A</span>
<span class="bdg" style="left:219px;top:5px;width:60px;background:#00a000"></span>
<span class="t" id="f81" style="left:231.40px;top:9.00px;font-size:11px;color:#fff;font-weight:bold;transform:scaleX(1.0282);">Online</span>
<span class="t" id="f82" style="left:440.30px;top:6.00px;font-size:14px;color:#3c8dbc;font-weight:bold;transform:scaleX(0.9018);">NAS - Synology</span>
<span class="t" id="f83" style="left:864.30px;top:6.00px;font-size:14px;color:#c8ced3;-webkit-text-stroke:.3px;transform:scaleX(0.8905);">192.168.1.82</span>
<span class="btn" style="left:1079px;top:4px"></span>
<span class="t" id="f84" style="left:1090.60px;top:13.00px;font-size:11.5px;color:#fff;font-weight:bold;transform:scaleX(0.8790);">Unassign</span>
</div>
<div class="row" style="top:454px;height:38px">
<span class="t" id="f85" style="left:97.50px;top:6.00px;font-size:14px;color:#c8ced3;-webkit-text-stroke:.3px;transform:scaleX(0.8889);">N/A</span>
<span class="bdg" style="left:219px;top:5px;width:60px;background:#00a000"></span>
<span class="t" id="f86" style="left:231.40px;top:9.00px;font-size:11px;color:#fff;font-weight:bold;transform:scaleX(1.0282);">Online</span>
<span class="t" id="f87" style="left:440.30px;top:6.00px;font-size:14px;color:#3c8dbc;font-weight:bold;transform:scaleX(0.8747);">PC - NUC LAN</span>
<span class="t" id="f88" style="left:864.30px;top:6.00px;font-size:14px;color:#c8ced3;-webkit-text-stroke:.3px;transform:scaleX(0.8905);">192.168.1.45</span>
<span class="btn" style="left:1079px;top:4px"></span>
<span class="t" id="f89" style="left:1090.60px;top:13.00px;font-size:11.5px;color:#fff;font-weight:bold;transform:scaleX(0.8790);">Unassign</span>
</div>
<div class="row st" style="top:492px;height:38px">
<span class="t" id="f90" style="left:97.50px;top:6.00px;font-size:14px;color:#c8ced3;-webkit-text-stroke:.3px;transform:scaleX(0.8889);">N/A</span>
<span class="bdg" style="left:219px;top:5px;width:60px;background:#a5291f"></span>
<span class="t" id="f91" style="left:230.75px;top:9.00px;font-size:11px;color:#fff;font-weight:bold;transform:scaleX(1.0475);">Offline</span>
<span class="t" id="f92" style="left:440.30px;top:6.00px;font-size:14px;color:#3c8dbc;font-weight:bold;transform:scaleX(0.9332);">Pixel-3a</span>
<span class="t" id="f93" style="left:864.30px;top:6.00px;font-size:14px;color:#c8ced3;-webkit-text-stroke:.3px;transform:scaleX(0.8880);">192.168.1.173</span>
<span class="btn" style="left:1079px;top:4px"></span>
<span class="t" id="f94" style="left:1090.60px;top:13.00px;font-size:11.5px;color:#fff;font-weight:bold;transform:scaleX(0.8790);">Unassign</span>
</div>
<div class="row" style="top:530px;height:38px">
<span class="t" id="f95" style="left:97.50px;top:6.00px;font-size:14px;color:#c8ced3;-webkit-text-stroke:.3px;transform:scaleX(0.8889);">N/A</span>
<span class="bdg" style="left:219px;top:5px;width:60px;background:#a5291f"></span>
<span class="t" id="f96" style="left:230.75px;top:9.00px;font-size:11px;color:#fff;font-weight:bold;transform:scaleX(1.0475);">Offline</span>
<span class="t" id="f97" style="left:440.30px;top:6.00px;font-size:14px;color:#3c8dbc;font-weight:bold;transform:scaleX(0.9156);">Raspberry Pi B</span>
<span class="t" id="f98" style="left:864.30px;top:6.00px;font-size:14px;color:#c8ced3;-webkit-text-stroke:.3px;transform:scaleX(0.8905);">192.168.1.19</span>
<span class="btn" style="left:1079px;top:4px"></span>
<span class="t" id="f99" style="left:1090.60px;top:13.00px;font-size:11.5px;color:#fff;font-weight:bold;transform:scaleX(0.8790);">Unassign</span>
</div>
</div>
</body></html>
